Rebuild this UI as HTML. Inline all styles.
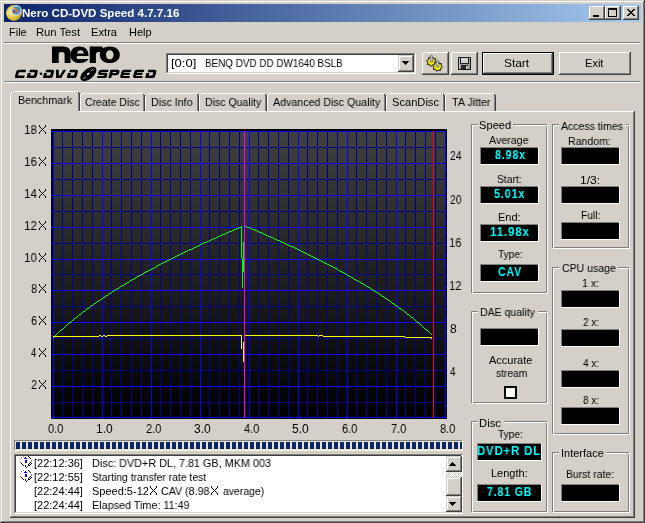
<!DOCTYPE html>
<html><head><meta charset="utf-8"><style>
html,body{margin:0;padding:0;}
body{width:645px;height:523px;position:relative;overflow:hidden;background:#D4D0C8;font-family:"Liberation Sans",sans-serif;font-size:11px;line-height:13px;color:#000;}
body>div,body>span,body>svg{position:absolute;display:block;}
span{white-space:nowrap;will-change:transform;}
</style></head><body>
<div style="left:0px;top:1px;width:644px;height:1px;background:#FFFFFF;"></div>
<div style="left:1px;top:1px;width:1px;height:521px;background:#FFFFFF;"></div>
<div style="left:644px;top:0px;width:1px;height:523px;background:#404040;"></div>
<div style="left:0px;top:522px;width:645px;height:1px;background:#404040;"></div>
<div style="left:643px;top:1px;width:1px;height:521px;background:#808080;"></div>
<div style="left:1px;top:521px;width:643px;height:1px;background:#808080;"></div>
<div style="left:4px;top:4px;width:637px;height:18px;background:linear-gradient(to right,#0A246A,#A6CAF0);"></div>
<span style="left:22.25px;top:7px;font-size:11px;font-weight:bold;color:#fff;letter-spacing:0px;white-space:pre;transform:scaleX(1.0503);transform-origin:0 0;">Nero CD-DVD Speed 4.7.7.16</span>
<div style="left:589px;top:6px;width:16px;height:14px;background:#D4D0C8;"></div>
<div style="left:589px;top:6px;width:15px;height:1px;background:#FFFFFF;"></div>
<div style="left:589px;top:6px;width:1px;height:13px;background:#FFFFFF;"></div>
<div style="left:589px;top:19px;width:16px;height:1px;background:#404040;"></div>
<div style="left:604px;top:6px;width:1px;height:14px;background:#404040;"></div>
<div style="left:590px;top:7px;width:13px;height:1px;background:#D4D0C8;"></div>
<div style="left:590px;top:7px;width:1px;height:11px;background:#D4D0C8;"></div>
<div style="left:590px;top:18px;width:14px;height:1px;background:#808080;"></div>
<div style="left:603px;top:7px;width:1px;height:12px;background:#808080;"></div>
<div style="left:605px;top:6px;width:16px;height:14px;background:#D4D0C8;"></div>
<div style="left:605px;top:6px;width:15px;height:1px;background:#FFFFFF;"></div>
<div style="left:605px;top:6px;width:1px;height:13px;background:#FFFFFF;"></div>
<div style="left:605px;top:19px;width:16px;height:1px;background:#404040;"></div>
<div style="left:620px;top:6px;width:1px;height:14px;background:#404040;"></div>
<div style="left:606px;top:7px;width:13px;height:1px;background:#D4D0C8;"></div>
<div style="left:606px;top:7px;width:1px;height:11px;background:#D4D0C8;"></div>
<div style="left:606px;top:18px;width:14px;height:1px;background:#808080;"></div>
<div style="left:619px;top:7px;width:1px;height:12px;background:#808080;"></div>
<div style="left:623px;top:6px;width:16px;height:14px;background:#D4D0C8;"></div>
<div style="left:623px;top:6px;width:15px;height:1px;background:#FFFFFF;"></div>
<div style="left:623px;top:6px;width:1px;height:13px;background:#FFFFFF;"></div>
<div style="left:623px;top:19px;width:16px;height:1px;background:#404040;"></div>
<div style="left:638px;top:6px;width:1px;height:14px;background:#404040;"></div>
<div style="left:624px;top:7px;width:13px;height:1px;background:#D4D0C8;"></div>
<div style="left:624px;top:7px;width:1px;height:11px;background:#D4D0C8;"></div>
<div style="left:624px;top:18px;width:14px;height:1px;background:#808080;"></div>
<div style="left:637px;top:7px;width:1px;height:12px;background:#808080;"></div>
<div style="left:593px;top:15px;width:6px;height:2px;background:#000;"></div>
<div style="left:608px;top:8px;width:9px;height:9px;background:transparent;box-sizing:border-box;border:1px solid #000;border-top-width:2px;"></div>
<svg style="left:627px;top:9px" width="8" height="7" shape-rendering="crispEdges" fill="#000"><rect x="0" y="0" width="1" height="1"/><rect x="1" y="0" width="1" height="1"/><rect x="6" y="0" width="1" height="1"/><rect x="7" y="0" width="1" height="1"/><rect x="1" y="1" width="1" height="1"/><rect x="2" y="1" width="1" height="1"/><rect x="5" y="1" width="1" height="1"/><rect x="6" y="1" width="1" height="1"/><rect x="2" y="2" width="1" height="1"/><rect x="3" y="2" width="1" height="1"/><rect x="4" y="2" width="1" height="1"/><rect x="5" y="2" width="1" height="1"/><rect x="3" y="3" width="1" height="1"/><rect x="4" y="3" width="1" height="1"/><rect x="2" y="4" width="1" height="1"/><rect x="3" y="4" width="1" height="1"/><rect x="4" y="4" width="1" height="1"/><rect x="5" y="4" width="1" height="1"/><rect x="1" y="5" width="1" height="1"/><rect x="2" y="5" width="1" height="1"/><rect x="5" y="5" width="1" height="1"/><rect x="6" y="5" width="1" height="1"/><rect x="0" y="6" width="1" height="1"/><rect x="1" y="6" width="1" height="1"/><rect x="6" y="6" width="1" height="1"/><rect x="7" y="6" width="1" height="1"/></svg>
<svg style="left:0px;top:0px" width="24" height="24" viewBox="0 0 24 24">
<defs><radialGradient id="gd" cx="0.35" cy="0.45" r="0.75"><stop offset="0" stop-color="#F8F0B0"/><stop offset="0.5" stop-color="#E0C840"/><stop offset="1" stop-color="#A08818"/></radialGradient></defs>
<circle cx="13.9" cy="13" r="7.9" fill="url(#gd)"/>
<circle cx="16.6" cy="10.4" r="4.7" fill="#4098E8" stroke="#D0D0D8" stroke-width="1.2"/>
<path d="M14.2,7.8 L18.6,12.6" stroke="#F06020" stroke-width="1.6"/>
<circle cx="13.8" cy="11.8" r="1.3" fill="#C02020"/>
<circle cx="18.6" cy="8.2" r="1.1" fill="#30A040"/>
<circle cx="14.2" cy="8.6" r="0.8" fill="#F0D020"/>
</svg>
<span style="left:8.62px;top:26px;font-size:11px;color:#000;letter-spacing:0px;white-space:pre;transform:scaleX(0.9750);transform-origin:0 0;">File</span>
<span style="left:36.18px;top:26px;font-size:11px;color:#000;letter-spacing:0px;white-space:pre;transform:scaleX(1.0190);transform-origin:0 0;">Run Test</span>
<span style="left:91.38px;top:26px;font-size:11px;color:#000;letter-spacing:0px;white-space:pre;transform:scaleX(1.0160);transform-origin:0 0;">Extra</span>
<span style="left:129.21px;top:26px;font-size:11px;color:#000;letter-spacing:0px;white-space:pre;transform:scaleX(0.9905);transform-origin:0 0;">Help</span>
<div style="left:4px;top:42px;width:636px;height:1px;background:#808080;"></div>
<div style="left:4px;top:43px;width:636px;height:1px;background:#FFFFFF;"></div>
<div style="left:4px;top:81px;width:636px;height:1px;background:#808080;"></div>
<div style="left:4px;top:82px;width:636px;height:1px;background:#FFFFFF;"></div>
<svg style="left:0px;top:40px" width="170" height="45" viewBox="0 40 170 45">
<g fill="#000" fill-rule="evenodd">
<path d="M52,63 V46.6 H63.5 Q70.6,46.6 70.6,53.2 V63 H64.6 V54.2 Q64.6,52 61.6,52 Q58.7,52 58.7,54.2 V63 Z"/>
<path d="M79.4,46.4 C85.2,46.4 88.4,49.8 88.4,54.6 L88.4,56 L76.8,56 L76.8,58.9 L88.4,58.9 C87.2,61.6 84.2,63 79.4,63 C73.8,63 70.4,59.6 70.4,54.7 C70.4,49.8 73.8,46.4 79.4,46.4 Z M77,53.6 L84,53.6 C83.6,51.4 82,50.2 80.5,50.2 C78.8,50.2 77.4,51.4 77,53.6 Z"/>
<path d="M89.7,63 V46.6 H101 Q103.2,46.6 103.2,48.5 V52 H98.2 Q95.9,52 95.9,54.5 V63 Z"/>
<path d="M109.8,46.4 C115.8,46.4 119.8,49.6 119.8,54.7 C119.8,59.8 115.8,63 109.8,63 C103.8,63 99.8,59.8 99.8,54.7 C99.8,49.6 103.8,46.4 109.8,46.4 Z M109.8,50.2 C107.6,50.2 106,52 106,54.8 C106,57.6 107.6,59.5 109.8,59.5 C112,59.5 113.6,57.6 113.6,54.8 C113.6,52 112,50.2 109.8,50.2 Z"/>
</g>
<g transform="translate(0,78.1) skewX(-14) translate(0,-78.1)" fill="#000" fill-rule="evenodd">
<path transform="translate(14.5,69.69999999999999)" d="M9.6,0 H2.2 Q0,0 0,2.2 V6.2 Q0,8.4 2.2,8.4 H9.6 V5.8 H2.9 V2.6 H9.6 Z"/><path transform="translate(26.6,69.69999999999999)" d="M1.2,0 H7.4 Q9.6,0 9.6,2.2 V6.2 Q9.6,8.4 7.4,8.4 H0 V3.4 H2.9 V5.8 H6.7 V2.6 H1.2 Z"/><path transform="translate(42.8,69.69999999999999)" d="M1.2,0 H7.4 Q9.6,0 9.6,2.2 V6.2 Q9.6,8.4 7.4,8.4 H0 V3.4 H2.9 V5.8 H6.7 V2.6 H1.2 Z"/><path transform="translate(53.8,69.69999999999999)" d="M0,0 H2.9 L4.4,5.8 H5.4 L7.3,0 H10.2 L7.4,8.4 H2.3 Z"/><path transform="translate(66.7,69.69999999999999)" d="M1.2,0 H7.4 Q9.6,0 9.6,2.2 V6.2 Q9.6,8.4 7.4,8.4 H0 V3.4 H2.9 V5.8 H6.7 V2.6 H1.2 Z"/><path transform="translate(96.9,69.69999999999999)" d="M9.6,0 H2.2 Q0,0 0,2.2 V3.1 Q0,5.3 2.2,5.3 H6.7 V6.2 H0 V8.4 H7.4 Q9.6,8.4 9.6,6.2 V5.3 Q9.6,3.1 7.4,3.1 H2.9 V2.2 H9.6 Z"/><path transform="translate(108.3,69.69999999999999)" d="M0,8.4 V0 H7.4 Q9.6,0 9.6,2.2 V3.4 Q9.6,5.6 7.4,5.6 H2.9 V8.4 Z M2.9,2.2 H6.7 V3.4 H2.9 Z"/><path transform="translate(119.8,69.69999999999999)" d="M9.6,0 H2.2 Q0,0 0,2.2 V6.2 Q0,8.4 2.2,8.4 H9.6 V6.2 H2.9 V5.3 H8.8 V3.1 H2.9 V2.2 H9.6 Z"/><path transform="translate(132.6,69.69999999999999)" d="M9.6,0 H2.2 Q0,0 0,2.2 V6.2 Q0,8.4 2.2,8.4 H9.6 V6.2 H2.9 V5.3 H8.8 V3.1 H2.9 V2.2 H9.6 Z"/><path transform="translate(145.1,69.69999999999999)" d="M1.2,0 H7.4 Q9.6,0 9.6,2.2 V6.2 Q9.6,8.4 7.4,8.4 H0 V3.4 H2.9 V5.8 H6.7 V2.6 H1.2 Z"/>
</g>
<rect x="39.8" y="72.6" width="2.3" height="2.3" fill="#000"/>
<ellipse cx="88.4" cy="73.9" rx="9.5" ry="5.1" transform="rotate(-38.5 88.4 73.9)" fill="#000"/>
<ellipse cx="88.3" cy="73.8" rx="1.7" ry="1.0" transform="rotate(-38.5 88.3 73.8)" fill="#E0E0E0"/>
<path d="M83.4,79.0 L86.0,76.4 M90.8,71.2 L93.4,68.8" stroke="#C8C8C8" stroke-width="0.9"/>
</svg>
<div style="left:166px;top:53px;width:250px;height:21px;background:#FFFFFF;"></div>
<div style="left:166px;top:53px;width:249px;height:1px;background:#808080;"></div>
<div style="left:166px;top:53px;width:1px;height:20px;background:#808080;"></div>
<div style="left:166px;top:73px;width:250px;height:1px;background:#FFFFFF;"></div>
<div style="left:415px;top:53px;width:1px;height:21px;background:#FFFFFF;"></div>
<div style="left:167px;top:54px;width:247px;height:1px;background:#404040;"></div>
<div style="left:167px;top:54px;width:1px;height:18px;background:#404040;"></div>
<div style="left:167px;top:72px;width:248px;height:1px;background:#D4D0C8;"></div>
<div style="left:414px;top:54px;width:1px;height:19px;background:#D4D0C8;"></div>
<span style="left:171.22px;top:57px;font-size:11px;color:#000;letter-spacing:0px;white-space:pre;transform:scaleX(1.1800);transform-origin:0 0;">[0:0]</span>
<span style="left:204.80px;top:57px;font-size:11px;color:#000;letter-spacing:0px;white-space:pre;transform:scaleX(0.8974);transform-origin:0 0;">BENQ DVD DD DW1640 BSLB</span>
<div style="left:398px;top:55px;width:16px;height:17px;background:#D4D0C8;"></div>
<div style="left:398px;top:55px;width:15px;height:1px;background:#D4D0C8;"></div>
<div style="left:398px;top:55px;width:1px;height:16px;background:#D4D0C8;"></div>
<div style="left:398px;top:71px;width:16px;height:1px;background:#404040;"></div>
<div style="left:413px;top:55px;width:1px;height:17px;background:#404040;"></div>
<div style="left:399px;top:56px;width:13px;height:1px;background:#FFFFFF;"></div>
<div style="left:399px;top:56px;width:1px;height:14px;background:#FFFFFF;"></div>
<div style="left:399px;top:70px;width:14px;height:1px;background:#808080;"></div>
<div style="left:412px;top:56px;width:1px;height:15px;background:#808080;"></div>
<svg style="left:402px;top:61px" width="7" height="4" shape-rendering="crispEdges" fill="#000"><rect x="0" y="0" width="7" height="1"/><rect x="1" y="1" width="5" height="1"/><rect x="2" y="2" width="3" height="1"/><rect x="3" y="3" width="1" height="1"/></svg>
<div style="left:422px;top:52px;width:27px;height:23px;background:#D4D0C8;"></div>
<div style="left:422px;top:52px;width:26px;height:1px;background:#FFFFFF;"></div>
<div style="left:422px;top:52px;width:1px;height:22px;background:#FFFFFF;"></div>
<div style="left:422px;top:74px;width:27px;height:1px;background:#404040;"></div>
<div style="left:448px;top:52px;width:1px;height:23px;background:#404040;"></div>
<div style="left:423px;top:53px;width:24px;height:1px;background:#D4D0C8;"></div>
<div style="left:423px;top:53px;width:1px;height:20px;background:#D4D0C8;"></div>
<div style="left:423px;top:73px;width:25px;height:1px;background:#808080;"></div>
<div style="left:447px;top:53px;width:1px;height:21px;background:#808080;"></div>
<div style="left:451px;top:52px;width:27px;height:23px;background:#D4D0C8;"></div>
<div style="left:451px;top:52px;width:26px;height:1px;background:#FFFFFF;"></div>
<div style="left:451px;top:52px;width:1px;height:22px;background:#FFFFFF;"></div>
<div style="left:451px;top:74px;width:27px;height:1px;background:#404040;"></div>
<div style="left:477px;top:52px;width:1px;height:23px;background:#404040;"></div>
<div style="left:452px;top:53px;width:24px;height:1px;background:#D4D0C8;"></div>
<div style="left:452px;top:53px;width:1px;height:20px;background:#D4D0C8;"></div>
<div style="left:452px;top:73px;width:25px;height:1px;background:#808080;"></div>
<div style="left:476px;top:53px;width:1px;height:21px;background:#808080;"></div>
<svg style="left:420px;top:50px" width="27" height="24" viewBox="420 50 27 24">
<polygon points="436.40,62.48 434.49,63.50 434.28,65.66 432.20,65.03 430.52,66.40 429.50,64.49 427.34,64.28 427.97,62.20 426.60,60.52 428.51,59.50 428.72,57.34 430.80,57.97 432.48,56.60 433.50,58.51 435.66,58.72 435.03,60.80" fill="#F8F000" stroke="#000" stroke-width="0.9" stroke-linejoin="round"/>
<polygon points="442.40,67.48 440.49,68.50 440.28,70.66 438.20,70.03 436.52,71.40 435.50,69.49 433.34,69.28 433.97,67.20 432.60,65.52 434.51,64.50 434.72,62.34 436.80,62.97 438.48,61.60 439.50,63.51 441.66,63.72 441.03,65.80" fill="#F8F000" stroke="#000" stroke-width="0.9" stroke-linejoin="round"/>
<path d="M430.2,62 V56.5 L431.5,54.8 L432.8,56.5 V62 Z" fill="#B8C0D0" stroke="#404858" stroke-width="0.6"/>
<path d="M436.2,67 V61.5 L437.5,59.8 L438.8,61.5 V67 Z" fill="#B8C0D0" stroke="#404858" stroke-width="0.6"/>
</svg>
<svg style="left:458px;top:57px" width="13" height="13" viewBox="0 0 13 13" shape-rendering="crispEdges">
<rect x="0" y="0" width="13" height="13" fill="#1A1A1A"/>
<rect x="1" y="1" width="11" height="11" fill="#9C9C9C"/>
<rect x="2" y="1" width="9" height="6" fill="#202020"/>
<rect x="3" y="1" width="7" height="5" fill="#D4D4D4"/>
<rect x="3" y="8" width="7" height="4" fill="#282828"/>
<rect x="8" y="9" width="2" height="3" fill="#C0C0C0"/>
<rect x="11" y="1" width="1" height="1" fill="#E0E0E0"/>
<rect x="1" y="1" width="1" height="11" fill="#C8C8C8"/>
</svg>
<div style="left:482px;top:52px;width:72px;height:23px;background:#000;"></div>
<div style="left:483px;top:53px;width:70px;height:21px;background:#D4D0C8;"></div>
<div style="left:483px;top:53px;width:69px;height:1px;background:#FFFFFF;"></div>
<div style="left:483px;top:53px;width:1px;height:20px;background:#FFFFFF;"></div>
<div style="left:483px;top:73px;width:70px;height:1px;background:#404040;"></div>
<div style="left:552px;top:53px;width:1px;height:21px;background:#404040;"></div>
<div style="left:484px;top:54px;width:67px;height:1px;background:#D4D0C8;"></div>
<div style="left:484px;top:54px;width:1px;height:18px;background:#D4D0C8;"></div>
<div style="left:484px;top:72px;width:68px;height:1px;background:#808080;"></div>
<div style="left:551px;top:54px;width:1px;height:19px;background:#808080;"></div>
<span style="left:504.22px;top:57px;font-size:11px;color:#000;letter-spacing:0px;white-space:pre;transform:scaleX(1.0818);transform-origin:0 0;">Start</span>
<div style="left:559px;top:52px;width:72px;height:23px;background:#D4D0C8;"></div>
<div style="left:559px;top:52px;width:71px;height:1px;background:#FFFFFF;"></div>
<div style="left:559px;top:52px;width:1px;height:22px;background:#FFFFFF;"></div>
<div style="left:559px;top:74px;width:72px;height:1px;background:#404040;"></div>
<div style="left:630px;top:52px;width:1px;height:23px;background:#404040;"></div>
<div style="left:560px;top:53px;width:69px;height:1px;background:#D4D0C8;"></div>
<div style="left:560px;top:53px;width:1px;height:20px;background:#D4D0C8;"></div>
<div style="left:560px;top:73px;width:70px;height:1px;background:#808080;"></div>
<div style="left:629px;top:53px;width:1px;height:21px;background:#808080;"></div>
<span style="left:584.69px;top:57px;font-size:11px;color:#000;letter-spacing:0px;white-space:pre;transform:scaleX(1.0059);transform-origin:0 0;">Exit</span>
<div style="left:10px;top:111px;width:624px;height:1px;background:#FFFFFF;"></div>
<div style="left:10px;top:111px;width:1px;height:406px;background:#FFFFFF;"></div>
<div style="left:633px;top:112px;width:1px;height:405px;background:#808080;"></div>
<div style="left:634px;top:111px;width:1px;height:407px;background:#404040;"></div>
<div style="left:11px;top:516px;width:623px;height:1px;background:#808080;"></div>
<div style="left:10px;top:517px;width:625px;height:1px;background:#404040;"></div>
<div style="left:11px;top:92px;width:68px;height:21px;background:#D4D0C8;"></div>
<div style="left:10px;top:93px;width:1px;height:19px;background:#FFFFFF;"></div>
<div style="left:11px;top:92px;width:1px;height:1px;background:#FFFFFF;"></div>
<div style="left:12px;top:91px;width:66px;height:1px;background:#FFFFFF;"></div>
<div style="left:78px;top:92px;width:1px;height:19px;background:#808080;"></div>
<div style="left:79px;top:93px;width:1px;height:18px;background:#404040;"></div>
<div style="left:78px;top:92px;width:1px;height:1px;background:#404040;"></div>
<span style="left:17.63px;top:94px;font-size:11px;color:#000;letter-spacing:0px;white-space:pre;transform:scaleX(0.9709);transform-origin:0 0;">Benchmark</span>
<div style="left:80px;top:95px;width:1px;height:16px;background:#FFFFFF;"></div>
<div style="left:81px;top:94px;width:1px;height:1px;background:#FFFFFF;"></div>
<div style="left:82px;top:93px;width:61px;height:1px;background:#FFFFFF;"></div>
<div style="left:143px;top:94px;width:1px;height:17px;background:#808080;"></div>
<div style="left:144px;top:95px;width:1px;height:16px;background:#404040;"></div>
<div style="left:143px;top:94px;width:1px;height:1px;background:#404040;"></div>
<span style="left:84.80px;top:96px;font-size:11px;color:#000;letter-spacing:0px;white-space:pre;transform:scaleX(0.9509);transform-origin:0 0;">Create Disc</span>
<div style="left:145px;top:95px;width:1px;height:16px;background:#FFFFFF;"></div>
<div style="left:146px;top:94px;width:1px;height:1px;background:#FFFFFF;"></div>
<div style="left:147px;top:93px;width:50px;height:1px;background:#FFFFFF;"></div>
<div style="left:197px;top:94px;width:1px;height:17px;background:#808080;"></div>
<div style="left:198px;top:95px;width:1px;height:16px;background:#404040;"></div>
<div style="left:197px;top:94px;width:1px;height:1px;background:#404040;"></div>
<span style="left:150.93px;top:96px;font-size:11px;color:#000;letter-spacing:0px;white-space:pre;transform:scaleX(0.9714);transform-origin:0 0;">Disc Info</span>
<div style="left:199px;top:95px;width:1px;height:16px;background:#FFFFFF;"></div>
<div style="left:200px;top:94px;width:1px;height:1px;background:#FFFFFF;"></div>
<div style="left:201px;top:93px;width:64px;height:1px;background:#FFFFFF;"></div>
<div style="left:265px;top:94px;width:1px;height:17px;background:#808080;"></div>
<div style="left:266px;top:95px;width:1px;height:16px;background:#404040;"></div>
<div style="left:265px;top:94px;width:1px;height:1px;background:#404040;"></div>
<span style="left:204.54px;top:96px;font-size:11px;color:#000;letter-spacing:0px;white-space:pre;transform:scaleX(0.9569);transform-origin:0 0;">Disc Quality</span>
<div style="left:267px;top:95px;width:1px;height:16px;background:#FFFFFF;"></div>
<div style="left:268px;top:94px;width:1px;height:1px;background:#FFFFFF;"></div>
<div style="left:269px;top:93px;width:115px;height:1px;background:#FFFFFF;"></div>
<div style="left:384px;top:94px;width:1px;height:17px;background:#808080;"></div>
<div style="left:385px;top:95px;width:1px;height:16px;background:#404040;"></div>
<div style="left:384px;top:94px;width:1px;height:1px;background:#404040;"></div>
<span style="left:273.00px;top:96px;font-size:11px;color:#000;letter-spacing:0px;white-space:pre;transform:scaleX(0.9685);transform-origin:0 0;">Advanced Disc Quality</span>
<div style="left:386px;top:95px;width:1px;height:16px;background:#FFFFFF;"></div>
<div style="left:387px;top:94px;width:1px;height:1px;background:#FFFFFF;"></div>
<div style="left:388px;top:93px;width:55px;height:1px;background:#FFFFFF;"></div>
<div style="left:443px;top:94px;width:1px;height:17px;background:#808080;"></div>
<div style="left:444px;top:95px;width:1px;height:16px;background:#404040;"></div>
<div style="left:443px;top:94px;width:1px;height:1px;background:#404040;"></div>
<span style="left:392.49px;top:96px;font-size:11px;color:#000;letter-spacing:0px;white-space:pre;transform:scaleX(1.0111);transform-origin:0 0;">ScanDisc</span>
<div style="left:445px;top:95px;width:1px;height:16px;background:#FFFFFF;"></div>
<div style="left:446px;top:94px;width:1px;height:1px;background:#FFFFFF;"></div>
<div style="left:447px;top:93px;width:47px;height:1px;background:#FFFFFF;"></div>
<div style="left:494px;top:94px;width:1px;height:17px;background:#808080;"></div>
<div style="left:495px;top:95px;width:1px;height:16px;background:#404040;"></div>
<div style="left:494px;top:94px;width:1px;height:1px;background:#404040;"></div>
<span style="left:451.60px;top:96px;font-size:11px;color:#000;letter-spacing:0px;white-space:pre;transform:scaleX(0.9744);transform-origin:0 0;">TA Jitter</span>
<svg style="left:0;top:0" width="645" height="523" shape-rendering="crispEdges">
<defs><linearGradient id="bg" x1="0" y1="0" x2="0" y2="1"><stop offset="0" stop-color="#404040"/><stop offset="1" stop-color="#000000"/></linearGradient></defs>
<rect x="51" y="129" width="396" height="290" fill="#000"/>
<rect x="53" y="131" width="393" height="287" fill="url(#bg)"/>
<rect x="51" y="131" width="395" height="1" fill="#0000FF"/>
<rect x="51" y="147" width="395" height="1" fill="#000088"/>
<rect x="51" y="163" width="395" height="1" fill="#0000FF"/>
<rect x="51" y="179" width="395" height="1" fill="#000088"/>
<rect x="51" y="195" width="395" height="1" fill="#0000FF"/>
<rect x="51" y="211" width="395" height="1" fill="#000088"/>
<rect x="51" y="227" width="395" height="1" fill="#0000FF"/>
<rect x="51" y="243" width="395" height="1" fill="#000088"/>
<rect x="51" y="259" width="395" height="1" fill="#0000FF"/>
<rect x="51" y="274" width="395" height="1" fill="#000088"/>
<rect x="51" y="290" width="395" height="1" fill="#0000FF"/>
<rect x="51" y="306" width="395" height="1" fill="#000088"/>
<rect x="51" y="322" width="395" height="1" fill="#0000FF"/>
<rect x="51" y="338" width="395" height="1" fill="#000088"/>
<rect x="51" y="354" width="395" height="1" fill="#0000FF"/>
<rect x="51" y="370" width="395" height="1" fill="#000088"/>
<rect x="51" y="386" width="395" height="1" fill="#0000FF"/>
<rect x="51" y="402" width="395" height="1" fill="#000088"/>
<rect x="51" y="417" width="395" height="1" fill="#0000FF"/>
<rect x="53" y="131" width="1" height="288" fill="#0000FF"/>
<rect x="62" y="131" width="1" height="288" fill="#000088"/>
<rect x="72" y="131" width="1" height="288" fill="#000088"/>
<rect x="82" y="131" width="1" height="288" fill="#000088"/>
<rect x="92" y="131" width="1" height="288" fill="#000088"/>
<rect x="102" y="131" width="1" height="288" fill="#0000FF"/>
<rect x="111" y="131" width="1" height="288" fill="#000088"/>
<rect x="121" y="131" width="1" height="288" fill="#000088"/>
<rect x="131" y="131" width="1" height="288" fill="#000088"/>
<rect x="141" y="131" width="1" height="288" fill="#000088"/>
<rect x="151" y="131" width="1" height="288" fill="#0000FF"/>
<rect x="160" y="131" width="1" height="288" fill="#000088"/>
<rect x="170" y="131" width="1" height="288" fill="#000088"/>
<rect x="180" y="131" width="1" height="288" fill="#000088"/>
<rect x="190" y="131" width="1" height="288" fill="#000088"/>
<rect x="200" y="131" width="1" height="288" fill="#0000FF"/>
<rect x="209" y="131" width="1" height="288" fill="#000088"/>
<rect x="219" y="131" width="1" height="288" fill="#000088"/>
<rect x="229" y="131" width="1" height="288" fill="#000088"/>
<rect x="239" y="131" width="1" height="288" fill="#000088"/>
<rect x="249" y="131" width="1" height="288" fill="#0000FF"/>
<rect x="258" y="131" width="1" height="288" fill="#000088"/>
<rect x="268" y="131" width="1" height="288" fill="#000088"/>
<rect x="278" y="131" width="1" height="288" fill="#000088"/>
<rect x="288" y="131" width="1" height="288" fill="#000088"/>
<rect x="298" y="131" width="1" height="288" fill="#0000FF"/>
<rect x="307" y="131" width="1" height="288" fill="#000088"/>
<rect x="317" y="131" width="1" height="288" fill="#000088"/>
<rect x="327" y="131" width="1" height="288" fill="#000088"/>
<rect x="337" y="131" width="1" height="288" fill="#000088"/>
<rect x="347" y="131" width="1" height="288" fill="#0000FF"/>
<rect x="356" y="131" width="1" height="288" fill="#000088"/>
<rect x="366" y="131" width="1" height="288" fill="#000088"/>
<rect x="376" y="131" width="1" height="288" fill="#000088"/>
<rect x="386" y="131" width="1" height="288" fill="#000088"/>
<rect x="396" y="131" width="1" height="288" fill="#0000FF"/>
<rect x="405" y="131" width="1" height="288" fill="#000088"/>
<rect x="415" y="131" width="1" height="288" fill="#000088"/>
<rect x="425" y="131" width="1" height="288" fill="#000088"/>
<rect x="435" y="131" width="1" height="288" fill="#000088"/>
<rect x="445" y="131" width="1" height="288" fill="#0000FF"/>
<rect x="53" y="337" width="1" height="1" fill="#00FF00"/>
<rect x="54" y="336" width="1" height="1" fill="#00FF00"/>
<rect x="55" y="335" width="1" height="1" fill="#00FF00"/>
<rect x="56" y="334" width="1" height="1" fill="#00FF00"/>
<rect x="57" y="333" width="1" height="1" fill="#00FF00"/>
<rect x="58" y="332" width="1" height="1" fill="#00FF00"/>
<rect x="59" y="331" width="1" height="1" fill="#00FF00"/>
<rect x="60" y="330" width="1" height="1" fill="#00FF00"/>
<rect x="61" y="329" width="1" height="1" fill="#00FF00"/>
<rect x="62" y="329" width="1" height="1" fill="#00FF00"/>
<rect x="63" y="328" width="1" height="1" fill="#00FF00"/>
<rect x="64" y="327" width="1" height="1" fill="#00FF00"/>
<rect x="65" y="326" width="1" height="1" fill="#00FF00"/>
<rect x="66" y="325" width="1" height="1" fill="#00FF00"/>
<rect x="67" y="324" width="1" height="1" fill="#00FF00"/>
<rect x="68" y="323" width="1" height="1" fill="#00FF00"/>
<rect x="69" y="322" width="1" height="1" fill="#00FF00"/>
<rect x="70" y="322" width="1" height="1" fill="#00FF00"/>
<rect x="71" y="321" width="1" height="1" fill="#00FF00"/>
<rect x="72" y="320" width="1" height="1" fill="#00FF00"/>
<rect x="73" y="319" width="1" height="1" fill="#00FF00"/>
<rect x="74" y="318" width="1" height="1" fill="#00FF00"/>
<rect x="75" y="318" width="1" height="1" fill="#00FF00"/>
<rect x="76" y="317" width="1" height="1" fill="#00FF00"/>
<rect x="77" y="316" width="1" height="1" fill="#00FF00"/>
<rect x="78" y="315" width="1" height="1" fill="#00FF00"/>
<rect x="79" y="314" width="1" height="1" fill="#00FF00"/>
<rect x="80" y="314" width="1" height="1" fill="#00FF00"/>
<rect x="81" y="313" width="1" height="1" fill="#00FF00"/>
<rect x="82" y="312" width="1" height="1" fill="#00FF00"/>
<rect x="83" y="311" width="1" height="1" fill="#00FF00"/>
<rect x="84" y="311" width="1" height="1" fill="#00FF00"/>
<rect x="85" y="310" width="1" height="1" fill="#00FF00"/>
<rect x="86" y="309" width="1" height="1" fill="#00FF00"/>
<rect x="87" y="308" width="1" height="1" fill="#00FF00"/>
<rect x="88" y="308" width="1" height="1" fill="#00FF00"/>
<rect x="89" y="307" width="1" height="1" fill="#00FF00"/>
<rect x="90" y="306" width="1" height="1" fill="#00FF00"/>
<rect x="91" y="305" width="1" height="1" fill="#00FF00"/>
<rect x="92" y="305" width="1" height="1" fill="#00FF00"/>
<rect x="93" y="304" width="1" height="1" fill="#00FF00"/>
<rect x="94" y="303" width="1" height="1" fill="#00FF00"/>
<rect x="95" y="303" width="1" height="1" fill="#00FF00"/>
<rect x="96" y="302" width="1" height="1" fill="#00FF00"/>
<rect x="97" y="301" width="1" height="1" fill="#00FF00"/>
<rect x="98" y="301" width="1" height="1" fill="#00FF00"/>
<rect x="99" y="300" width="1" height="1" fill="#00FF00"/>
<rect x="100" y="299" width="1" height="1" fill="#00FF00"/>
<rect x="101" y="299" width="1" height="1" fill="#00FF00"/>
<rect x="102" y="298" width="1" height="1" fill="#00FF00"/>
<rect x="103" y="297" width="1" height="1" fill="#00FF00"/>
<rect x="104" y="297" width="1" height="1" fill="#00FF00"/>
<rect x="105" y="296" width="1" height="1" fill="#00FF00"/>
<rect x="106" y="295" width="1" height="1" fill="#00FF00"/>
<rect x="107" y="295" width="1" height="1" fill="#00FF00"/>
<rect x="108" y="294" width="1" height="1" fill="#00FF00"/>
<rect x="109" y="293" width="1" height="1" fill="#00FF00"/>
<rect x="110" y="293" width="1" height="1" fill="#00FF00"/>
<rect x="111" y="292" width="1" height="1" fill="#00FF00"/>
<rect x="112" y="291" width="1" height="1" fill="#00FF00"/>
<rect x="113" y="291" width="1" height="1" fill="#00FF00"/>
<rect x="114" y="290" width="1" height="1" fill="#00FF00"/>
<rect x="115" y="289" width="1" height="1" fill="#00FF00"/>
<rect x="116" y="289" width="1" height="1" fill="#00FF00"/>
<rect x="117" y="288" width="1" height="1" fill="#00FF00"/>
<rect x="118" y="288" width="1" height="1" fill="#00FF00"/>
<rect x="119" y="287" width="1" height="1" fill="#00FF00"/>
<rect x="120" y="286" width="1" height="1" fill="#00FF00"/>
<rect x="121" y="286" width="1" height="1" fill="#00FF00"/>
<rect x="122" y="285" width="1" height="1" fill="#00FF00"/>
<rect x="123" y="285" width="1" height="1" fill="#00FF00"/>
<rect x="124" y="284" width="1" height="1" fill="#00FF00"/>
<rect x="125" y="283" width="1" height="1" fill="#00FF00"/>
<rect x="126" y="283" width="1" height="1" fill="#00FF00"/>
<rect x="127" y="282" width="1" height="1" fill="#00FF00"/>
<rect x="128" y="282" width="1" height="1" fill="#00FF00"/>
<rect x="129" y="281" width="1" height="1" fill="#00FF00"/>
<rect x="130" y="280" width="1" height="1" fill="#00FF00"/>
<rect x="131" y="280" width="1" height="1" fill="#00FF00"/>
<rect x="132" y="279" width="1" height="1" fill="#00FF00"/>
<rect x="133" y="279" width="1" height="1" fill="#00FF00"/>
<rect x="134" y="278" width="1" height="1" fill="#00FF00"/>
<rect x="135" y="278" width="1" height="1" fill="#00FF00"/>
<rect x="136" y="277" width="1" height="1" fill="#00FF00"/>
<rect x="137" y="276" width="1" height="1" fill="#00FF00"/>
<rect x="138" y="276" width="1" height="1" fill="#00FF00"/>
<rect x="139" y="275" width="1" height="1" fill="#00FF00"/>
<rect x="140" y="275" width="1" height="1" fill="#00FF00"/>
<rect x="141" y="274" width="1" height="1" fill="#00FF00"/>
<rect x="142" y="274" width="1" height="1" fill="#00FF00"/>
<rect x="143" y="273" width="1" height="1" fill="#00FF00"/>
<rect x="144" y="272" width="1" height="1" fill="#00FF00"/>
<rect x="145" y="272" width="1" height="1" fill="#00FF00"/>
<rect x="146" y="271" width="1" height="1" fill="#00FF00"/>
<rect x="147" y="271" width="1" height="1" fill="#00FF00"/>
<rect x="148" y="270" width="1" height="1" fill="#00FF00"/>
<rect x="149" y="270" width="1" height="1" fill="#00FF00"/>
<rect x="150" y="269" width="1" height="1" fill="#00FF00"/>
<rect x="151" y="269" width="1" height="1" fill="#00FF00"/>
<rect x="152" y="268" width="1" height="1" fill="#00FF00"/>
<rect x="153" y="268" width="1" height="1" fill="#00FF00"/>
<rect x="154" y="267" width="1" height="1" fill="#00FF00"/>
<rect x="155" y="267" width="1" height="1" fill="#00FF00"/>
<rect x="156" y="266" width="1" height="1" fill="#00FF00"/>
<rect x="157" y="265" width="1" height="1" fill="#00FF00"/>
<rect x="158" y="265" width="1" height="1" fill="#00FF00"/>
<rect x="159" y="264" width="1" height="1" fill="#00FF00"/>
<rect x="160" y="264" width="1" height="1" fill="#00FF00"/>
<rect x="161" y="263" width="1" height="1" fill="#00FF00"/>
<rect x="162" y="263" width="1" height="1" fill="#00FF00"/>
<rect x="163" y="262" width="1" height="1" fill="#00FF00"/>
<rect x="164" y="262" width="1" height="1" fill="#00FF00"/>
<rect x="165" y="261" width="1" height="1" fill="#00FF00"/>
<rect x="166" y="261" width="1" height="1" fill="#00FF00"/>
<rect x="167" y="260" width="1" height="1" fill="#00FF00"/>
<rect x="168" y="260" width="1" height="1" fill="#00FF00"/>
<rect x="169" y="259" width="1" height="1" fill="#00FF00"/>
<rect x="170" y="259" width="1" height="1" fill="#00FF00"/>
<rect x="171" y="258" width="1" height="1" fill="#00FF00"/>
<rect x="172" y="258" width="1" height="1" fill="#00FF00"/>
<rect x="173" y="257" width="1" height="1" fill="#00FF00"/>
<rect x="174" y="257" width="1" height="1" fill="#00FF00"/>
<rect x="175" y="256" width="1" height="1" fill="#00FF00"/>
<rect x="176" y="256" width="1" height="1" fill="#00FF00"/>
<rect x="177" y="255" width="1" height="1" fill="#00FF00"/>
<rect x="178" y="255" width="1" height="1" fill="#00FF00"/>
<rect x="179" y="254" width="1" height="1" fill="#00FF00"/>
<rect x="180" y="254" width="1" height="1" fill="#00FF00"/>
<rect x="181" y="253" width="1" height="1" fill="#00FF00"/>
<rect x="182" y="253" width="1" height="1" fill="#00FF00"/>
<rect x="183" y="252" width="1" height="1" fill="#00FF00"/>
<rect x="184" y="252" width="1" height="1" fill="#00FF00"/>
<rect x="185" y="251" width="1" height="1" fill="#00FF00"/>
<rect x="186" y="251" width="1" height="1" fill="#00FF00"/>
<rect x="187" y="250" width="1" height="1" fill="#00FF00"/>
<rect x="188" y="250" width="1" height="1" fill="#00FF00"/>
<rect x="189" y="249" width="1" height="1" fill="#00FF00"/>
<rect x="190" y="249" width="1" height="1" fill="#00FF00"/>
<rect x="191" y="249" width="1" height="1" fill="#00FF00"/>
<rect x="192" y="248" width="1" height="1" fill="#00FF00"/>
<rect x="193" y="248" width="1" height="1" fill="#00FF00"/>
<rect x="194" y="247" width="1" height="1" fill="#00FF00"/>
<rect x="195" y="247" width="1" height="1" fill="#00FF00"/>
<rect x="196" y="246" width="1" height="1" fill="#00FF00"/>
<rect x="197" y="246" width="1" height="1" fill="#00FF00"/>
<rect x="198" y="245" width="1" height="1" fill="#00FF00"/>
<rect x="199" y="245" width="1" height="1" fill="#00FF00"/>
<rect x="200" y="244" width="1" height="1" fill="#00FF00"/>
<rect x="201" y="244" width="1" height="1" fill="#00FF00"/>
<rect x="202" y="243" width="1" height="1" fill="#00FF00"/>
<rect x="203" y="243" width="1" height="1" fill="#00FF00"/>
<rect x="204" y="242" width="1" height="1" fill="#00FF00"/>
<rect x="205" y="242" width="1" height="1" fill="#00FF00"/>
<rect x="206" y="242" width="1" height="1" fill="#00FF00"/>
<rect x="207" y="241" width="1" height="1" fill="#00FF00"/>
<rect x="208" y="241" width="1" height="1" fill="#00FF00"/>
<rect x="209" y="240" width="1" height="1" fill="#00FF00"/>
<rect x="210" y="240" width="1" height="1" fill="#00FF00"/>
<rect x="211" y="239" width="1" height="1" fill="#00FF00"/>
<rect x="212" y="239" width="1" height="1" fill="#00FF00"/>
<rect x="213" y="238" width="1" height="1" fill="#00FF00"/>
<rect x="214" y="238" width="1" height="1" fill="#00FF00"/>
<rect x="215" y="238" width="1" height="1" fill="#00FF00"/>
<rect x="216" y="237" width="1" height="1" fill="#00FF00"/>
<rect x="217" y="237" width="1" height="1" fill="#00FF00"/>
<rect x="218" y="236" width="1" height="1" fill="#00FF00"/>
<rect x="219" y="236" width="1" height="1" fill="#00FF00"/>
<rect x="220" y="235" width="1" height="1" fill="#00FF00"/>
<rect x="221" y="235" width="1" height="1" fill="#00FF00"/>
<rect x="222" y="234" width="1" height="1" fill="#00FF00"/>
<rect x="223" y="234" width="1" height="1" fill="#00FF00"/>
<rect x="224" y="234" width="1" height="1" fill="#00FF00"/>
<rect x="225" y="233" width="1" height="1" fill="#00FF00"/>
<rect x="226" y="233" width="1" height="1" fill="#00FF00"/>
<rect x="227" y="232" width="1" height="1" fill="#00FF00"/>
<rect x="228" y="232" width="1" height="1" fill="#00FF00"/>
<rect x="229" y="231" width="1" height="1" fill="#00FF00"/>
<rect x="230" y="231" width="1" height="1" fill="#00FF00"/>
<rect x="231" y="231" width="1" height="1" fill="#00FF00"/>
<rect x="232" y="230" width="1" height="1" fill="#00FF00"/>
<rect x="233" y="230" width="1" height="1" fill="#00FF00"/>
<rect x="234" y="229" width="1" height="1" fill="#00FF00"/>
<rect x="235" y="229" width="1" height="1" fill="#00FF00"/>
<rect x="236" y="228" width="1" height="1" fill="#00FF00"/>
<rect x="237" y="228" width="1" height="1" fill="#00FF00"/>
<rect x="238" y="228" width="1" height="1" fill="#00FF00"/>
<rect x="239" y="227" width="1" height="1" fill="#00FF00"/>
<rect x="240" y="227" width="1" height="1" fill="#00FF00"/>
<rect x="241" y="226" width="1" height="1" fill="#00FF00"/>
<rect x="245" y="226" width="1" height="1" fill="#00FF00"/>
<rect x="246" y="226" width="1" height="1" fill="#00FF00"/>
<rect x="247" y="227" width="1" height="1" fill="#00FF00"/>
<rect x="248" y="227" width="1" height="1" fill="#00FF00"/>
<rect x="249" y="227" width="1" height="1" fill="#00FF00"/>
<rect x="250" y="228" width="1" height="1" fill="#00FF00"/>
<rect x="251" y="228" width="1" height="1" fill="#00FF00"/>
<rect x="252" y="229" width="1" height="1" fill="#00FF00"/>
<rect x="253" y="229" width="1" height="1" fill="#00FF00"/>
<rect x="254" y="229" width="1" height="1" fill="#00FF00"/>
<rect x="255" y="230" width="1" height="1" fill="#00FF00"/>
<rect x="256" y="230" width="1" height="1" fill="#00FF00"/>
<rect x="257" y="231" width="1" height="1" fill="#00FF00"/>
<rect x="258" y="231" width="1" height="1" fill="#00FF00"/>
<rect x="259" y="232" width="1" height="1" fill="#00FF00"/>
<rect x="260" y="232" width="1" height="1" fill="#00FF00"/>
<rect x="261" y="232" width="1" height="1" fill="#00FF00"/>
<rect x="262" y="233" width="1" height="1" fill="#00FF00"/>
<rect x="263" y="233" width="1" height="1" fill="#00FF00"/>
<rect x="264" y="234" width="1" height="1" fill="#00FF00"/>
<rect x="265" y="234" width="1" height="1" fill="#00FF00"/>
<rect x="266" y="235" width="1" height="1" fill="#00FF00"/>
<rect x="267" y="235" width="1" height="1" fill="#00FF00"/>
<rect x="268" y="236" width="1" height="1" fill="#00FF00"/>
<rect x="269" y="236" width="1" height="1" fill="#00FF00"/>
<rect x="270" y="236" width="1" height="1" fill="#00FF00"/>
<rect x="271" y="237" width="1" height="1" fill="#00FF00"/>
<rect x="272" y="237" width="1" height="1" fill="#00FF00"/>
<rect x="273" y="238" width="1" height="1" fill="#00FF00"/>
<rect x="274" y="238" width="1" height="1" fill="#00FF00"/>
<rect x="275" y="239" width="1" height="1" fill="#00FF00"/>
<rect x="276" y="239" width="1" height="1" fill="#00FF00"/>
<rect x="277" y="240" width="1" height="1" fill="#00FF00"/>
<rect x="278" y="240" width="1" height="1" fill="#00FF00"/>
<rect x="279" y="240" width="1" height="1" fill="#00FF00"/>
<rect x="280" y="241" width="1" height="1" fill="#00FF00"/>
<rect x="281" y="241" width="1" height="1" fill="#00FF00"/>
<rect x="282" y="242" width="1" height="1" fill="#00FF00"/>
<rect x="283" y="242" width="1" height="1" fill="#00FF00"/>
<rect x="284" y="243" width="1" height="1" fill="#00FF00"/>
<rect x="285" y="243" width="1" height="1" fill="#00FF00"/>
<rect x="286" y="244" width="1" height="1" fill="#00FF00"/>
<rect x="287" y="244" width="1" height="1" fill="#00FF00"/>
<rect x="288" y="245" width="1" height="1" fill="#00FF00"/>
<rect x="289" y="245" width="1" height="1" fill="#00FF00"/>
<rect x="290" y="246" width="1" height="1" fill="#00FF00"/>
<rect x="291" y="246" width="1" height="1" fill="#00FF00"/>
<rect x="292" y="246" width="1" height="1" fill="#00FF00"/>
<rect x="293" y="247" width="1" height="1" fill="#00FF00"/>
<rect x="294" y="247" width="1" height="1" fill="#00FF00"/>
<rect x="295" y="248" width="1" height="1" fill="#00FF00"/>
<rect x="296" y="248" width="1" height="1" fill="#00FF00"/>
<rect x="297" y="249" width="1" height="1" fill="#00FF00"/>
<rect x="298" y="249" width="1" height="1" fill="#00FF00"/>
<rect x="299" y="250" width="1" height="1" fill="#00FF00"/>
<rect x="300" y="250" width="1" height="1" fill="#00FF00"/>
<rect x="301" y="251" width="1" height="1" fill="#00FF00"/>
<rect x="302" y="251" width="1" height="1" fill="#00FF00"/>
<rect x="303" y="252" width="1" height="1" fill="#00FF00"/>
<rect x="304" y="252" width="1" height="1" fill="#00FF00"/>
<rect x="305" y="253" width="1" height="1" fill="#00FF00"/>
<rect x="306" y="253" width="1" height="1" fill="#00FF00"/>
<rect x="307" y="254" width="1" height="1" fill="#00FF00"/>
<rect x="308" y="254" width="1" height="1" fill="#00FF00"/>
<rect x="309" y="255" width="1" height="1" fill="#00FF00"/>
<rect x="310" y="255" width="1" height="1" fill="#00FF00"/>
<rect x="311" y="256" width="1" height="1" fill="#00FF00"/>
<rect x="312" y="256" width="1" height="1" fill="#00FF00"/>
<rect x="313" y="257" width="1" height="1" fill="#00FF00"/>
<rect x="314" y="257" width="1" height="1" fill="#00FF00"/>
<rect x="315" y="258" width="1" height="1" fill="#00FF00"/>
<rect x="316" y="258" width="1" height="1" fill="#00FF00"/>
<rect x="317" y="259" width="1" height="1" fill="#00FF00"/>
<rect x="318" y="259" width="1" height="1" fill="#00FF00"/>
<rect x="319" y="260" width="1" height="1" fill="#00FF00"/>
<rect x="320" y="260" width="1" height="1" fill="#00FF00"/>
<rect x="321" y="261" width="1" height="1" fill="#00FF00"/>
<rect x="322" y="261" width="1" height="1" fill="#00FF00"/>
<rect x="323" y="262" width="1" height="1" fill="#00FF00"/>
<rect x="324" y="262" width="1" height="1" fill="#00FF00"/>
<rect x="325" y="263" width="1" height="1" fill="#00FF00"/>
<rect x="326" y="263" width="1" height="1" fill="#00FF00"/>
<rect x="327" y="264" width="1" height="1" fill="#00FF00"/>
<rect x="328" y="264" width="1" height="1" fill="#00FF00"/>
<rect x="329" y="265" width="1" height="1" fill="#00FF00"/>
<rect x="330" y="265" width="1" height="1" fill="#00FF00"/>
<rect x="331" y="266" width="1" height="1" fill="#00FF00"/>
<rect x="332" y="266" width="1" height="1" fill="#00FF00"/>
<rect x="333" y="267" width="1" height="1" fill="#00FF00"/>
<rect x="334" y="267" width="1" height="1" fill="#00FF00"/>
<rect x="335" y="268" width="1" height="1" fill="#00FF00"/>
<rect x="336" y="268" width="1" height="1" fill="#00FF00"/>
<rect x="337" y="269" width="1" height="1" fill="#00FF00"/>
<rect x="338" y="270" width="1" height="1" fill="#00FF00"/>
<rect x="339" y="270" width="1" height="1" fill="#00FF00"/>
<rect x="340" y="271" width="1" height="1" fill="#00FF00"/>
<rect x="341" y="271" width="1" height="1" fill="#00FF00"/>
<rect x="342" y="272" width="1" height="1" fill="#00FF00"/>
<rect x="343" y="272" width="1" height="1" fill="#00FF00"/>
<rect x="344" y="273" width="1" height="1" fill="#00FF00"/>
<rect x="345" y="273" width="1" height="1" fill="#00FF00"/>
<rect x="346" y="274" width="1" height="1" fill="#00FF00"/>
<rect x="347" y="275" width="1" height="1" fill="#00FF00"/>
<rect x="348" y="275" width="1" height="1" fill="#00FF00"/>
<rect x="349" y="276" width="1" height="1" fill="#00FF00"/>
<rect x="350" y="276" width="1" height="1" fill="#00FF00"/>
<rect x="351" y="277" width="1" height="1" fill="#00FF00"/>
<rect x="352" y="277" width="1" height="1" fill="#00FF00"/>
<rect x="353" y="278" width="1" height="1" fill="#00FF00"/>
<rect x="354" y="279" width="1" height="1" fill="#00FF00"/>
<rect x="355" y="279" width="1" height="1" fill="#00FF00"/>
<rect x="356" y="280" width="1" height="1" fill="#00FF00"/>
<rect x="357" y="280" width="1" height="1" fill="#00FF00"/>
<rect x="358" y="281" width="1" height="1" fill="#00FF00"/>
<rect x="359" y="281" width="1" height="1" fill="#00FF00"/>
<rect x="360" y="282" width="1" height="1" fill="#00FF00"/>
<rect x="361" y="283" width="1" height="1" fill="#00FF00"/>
<rect x="362" y="283" width="1" height="1" fill="#00FF00"/>
<rect x="363" y="284" width="1" height="1" fill="#00FF00"/>
<rect x="364" y="284" width="1" height="1" fill="#00FF00"/>
<rect x="365" y="285" width="1" height="1" fill="#00FF00"/>
<rect x="366" y="286" width="1" height="1" fill="#00FF00"/>
<rect x="367" y="286" width="1" height="1" fill="#00FF00"/>
<rect x="368" y="287" width="1" height="1" fill="#00FF00"/>
<rect x="369" y="287" width="1" height="1" fill="#00FF00"/>
<rect x="370" y="288" width="1" height="1" fill="#00FF00"/>
<rect x="371" y="289" width="1" height="1" fill="#00FF00"/>
<rect x="372" y="289" width="1" height="1" fill="#00FF00"/>
<rect x="373" y="290" width="1" height="1" fill="#00FF00"/>
<rect x="374" y="291" width="1" height="1" fill="#00FF00"/>
<rect x="375" y="291" width="1" height="1" fill="#00FF00"/>
<rect x="376" y="292" width="1" height="1" fill="#00FF00"/>
<rect x="377" y="292" width="1" height="1" fill="#00FF00"/>
<rect x="378" y="293" width="1" height="1" fill="#00FF00"/>
<rect x="379" y="294" width="1" height="1" fill="#00FF00"/>
<rect x="380" y="294" width="1" height="1" fill="#00FF00"/>
<rect x="381" y="295" width="1" height="1" fill="#00FF00"/>
<rect x="382" y="296" width="1" height="1" fill="#00FF00"/>
<rect x="383" y="296" width="1" height="1" fill="#00FF00"/>
<rect x="384" y="297" width="1" height="1" fill="#00FF00"/>
<rect x="385" y="298" width="1" height="1" fill="#00FF00"/>
<rect x="386" y="298" width="1" height="1" fill="#00FF00"/>
<rect x="387" y="299" width="1" height="1" fill="#00FF00"/>
<rect x="388" y="300" width="1" height="1" fill="#00FF00"/>
<rect x="389" y="300" width="1" height="1" fill="#00FF00"/>
<rect x="390" y="301" width="1" height="1" fill="#00FF00"/>
<rect x="391" y="302" width="1" height="1" fill="#00FF00"/>
<rect x="392" y="303" width="1" height="1" fill="#00FF00"/>
<rect x="393" y="303" width="1" height="1" fill="#00FF00"/>
<rect x="394" y="304" width="1" height="1" fill="#00FF00"/>
<rect x="395" y="305" width="1" height="1" fill="#00FF00"/>
<rect x="396" y="305" width="1" height="1" fill="#00FF00"/>
<rect x="397" y="306" width="1" height="1" fill="#00FF00"/>
<rect x="398" y="307" width="1" height="1" fill="#00FF00"/>
<rect x="399" y="308" width="1" height="1" fill="#00FF00"/>
<rect x="400" y="308" width="1" height="1" fill="#00FF00"/>
<rect x="401" y="309" width="1" height="1" fill="#00FF00"/>
<rect x="402" y="310" width="1" height="1" fill="#00FF00"/>
<rect x="403" y="310" width="1" height="1" fill="#00FF00"/>
<rect x="404" y="311" width="1" height="1" fill="#00FF00"/>
<rect x="405" y="312" width="1" height="1" fill="#00FF00"/>
<rect x="406" y="313" width="1" height="1" fill="#00FF00"/>
<rect x="407" y="314" width="1" height="1" fill="#00FF00"/>
<rect x="408" y="314" width="1" height="1" fill="#00FF00"/>
<rect x="409" y="315" width="1" height="1" fill="#00FF00"/>
<rect x="410" y="316" width="1" height="1" fill="#00FF00"/>
<rect x="411" y="317" width="1" height="1" fill="#00FF00"/>
<rect x="412" y="317" width="1" height="1" fill="#00FF00"/>
<rect x="413" y="318" width="1" height="1" fill="#00FF00"/>
<rect x="414" y="319" width="1" height="1" fill="#00FF00"/>
<rect x="415" y="320" width="1" height="1" fill="#00FF00"/>
<rect x="416" y="321" width="1" height="1" fill="#00FF00"/>
<rect x="417" y="322" width="1" height="1" fill="#00FF00"/>
<rect x="418" y="322" width="1" height="1" fill="#00FF00"/>
<rect x="419" y="323" width="1" height="1" fill="#00FF00"/>
<rect x="420" y="324" width="1" height="1" fill="#00FF00"/>
<rect x="421" y="325" width="1" height="1" fill="#00FF00"/>
<rect x="422" y="326" width="1" height="1" fill="#00FF00"/>
<rect x="423" y="327" width="1" height="1" fill="#00FF00"/>
<rect x="424" y="328" width="1" height="1" fill="#00FF00"/>
<rect x="425" y="329" width="1" height="1" fill="#00FF00"/>
<rect x="426" y="329" width="1" height="1" fill="#00FF00"/>
<rect x="427" y="330" width="1" height="1" fill="#00FF00"/>
<rect x="428" y="331" width="1" height="1" fill="#00FF00"/>
<rect x="429" y="332" width="1" height="1" fill="#00FF00"/>
<rect x="430" y="333" width="1" height="1" fill="#00FF00"/>
<rect x="431" y="334" width="1" height="1" fill="#00FF00"/>
<rect x="241" y="227" width="1" height="31" fill="#00FF00"/>
<rect x="242" y="258" width="1" height="30" fill="#00FF00"/>
<rect x="243" y="242" width="1" height="30" fill="#00FF00"/>
<rect x="53" y="336" width="46" height="1" fill="#FFFF00"/>
<rect x="99" y="335" width="2" height="1" fill="#FFFF00"/>
<rect x="101" y="336" width="2" height="1" fill="#FFFF00"/>
<rect x="103" y="335" width="2" height="1" fill="#FFFF00"/>
<rect x="105" y="336" width="2" height="1" fill="#FFFF00"/>
<rect x="107" y="335" width="134" height="1" fill="#FFFF00"/>
<rect x="241" y="335" width="1" height="14" fill="#FFFF00"/>
<rect x="243" y="342" width="1" height="20" fill="#FFFF00"/>
<rect x="245" y="335" width="73" height="1" fill="#FFFF00"/>
<rect x="318" y="336" width="1" height="1" fill="#FFFF00"/>
<rect x="319" y="335" width="4" height="1" fill="#FFFF00"/>
<rect x="323" y="336" width="82" height="1" fill="#FFFF00"/>
<rect x="405" y="337" width="27" height="1" fill="#FFFF00"/>
<rect x="431" y="338" width="1" height="1" fill="#FFFF00"/>
<rect x="446" y="406" width="1" height="1" fill="#0000FF"/>
<rect x="446" y="395" width="1" height="1" fill="#0000FF"/>
<rect x="446" y="384" width="1" height="1" fill="#0000FF"/>
<rect x="446" y="373" width="1" height="1" fill="#0000FF"/>
<rect x="446" y="363" width="1" height="1" fill="#0000FF"/>
<rect x="446" y="352" width="1" height="1" fill="#0000FF"/>
<rect x="446" y="341" width="1" height="1" fill="#0000FF"/>
<rect x="446" y="330" width="1" height="1" fill="#0000FF"/>
<rect x="446" y="319" width="1" height="1" fill="#0000FF"/>
<rect x="446" y="309" width="1" height="1" fill="#0000FF"/>
<rect x="446" y="298" width="1" height="1" fill="#0000FF"/>
<rect x="446" y="287" width="1" height="1" fill="#0000FF"/>
<rect x="446" y="276" width="1" height="1" fill="#0000FF"/>
<rect x="446" y="265" width="1" height="1" fill="#0000FF"/>
<rect x="446" y="255" width="1" height="1" fill="#0000FF"/>
<rect x="446" y="244" width="1" height="1" fill="#0000FF"/>
<rect x="446" y="233" width="1" height="1" fill="#0000FF"/>
<rect x="446" y="222" width="1" height="1" fill="#0000FF"/>
<rect x="446" y="211" width="1" height="1" fill="#0000FF"/>
<rect x="446" y="201" width="1" height="1" fill="#0000FF"/>
<rect x="446" y="190" width="1" height="1" fill="#0000FF"/>
<rect x="446" y="179" width="1" height="1" fill="#0000FF"/>
<rect x="446" y="168" width="1" height="1" fill="#0000FF"/>
<rect x="446" y="157" width="1" height="1" fill="#0000FF"/>
<rect x="244" y="131" width="1" height="287" fill="#FF00FF"/>
<rect x="433" y="131" width="1" height="287" fill="#FF0000"/>
</svg>
<span style="left:23.74px;top:124px;font-size:12px;color:#000;letter-spacing:0px;white-space:pre;transform:scaleX(0.9583);transform-origin:0 0;">18</span>
<svg style="left:39px;top:125px" width="7" height="9" shape-rendering="crispEdges" fill="#000"><rect x="0" y="0" width="1" height="1"/><rect x="6" y="0" width="1" height="1"/><rect x="0" y="1" width="1" height="1"/><rect x="6" y="1" width="1" height="1"/><rect x="1" y="2" width="1" height="1"/><rect x="5" y="2" width="1" height="1"/><rect x="2" y="3" width="1" height="1"/><rect x="4" y="3" width="1" height="1"/><rect x="3" y="4" width="1" height="1"/><rect x="2" y="5" width="1" height="1"/><rect x="4" y="5" width="1" height="1"/><rect x="1" y="6" width="1" height="1"/><rect x="5" y="6" width="1" height="1"/><rect x="0" y="7" width="1" height="1"/><rect x="6" y="7" width="1" height="1"/><rect x="0" y="8" width="1" height="1"/><rect x="6" y="8" width="1" height="1"/></svg>
<span style="left:23.74px;top:156px;font-size:12px;color:#000;letter-spacing:0px;white-space:pre;transform:scaleX(0.9583);transform-origin:0 0;">16</span>
<svg style="left:39px;top:157px" width="7" height="9" shape-rendering="crispEdges" fill="#000"><rect x="0" y="0" width="1" height="1"/><rect x="6" y="0" width="1" height="1"/><rect x="0" y="1" width="1" height="1"/><rect x="6" y="1" width="1" height="1"/><rect x="1" y="2" width="1" height="1"/><rect x="5" y="2" width="1" height="1"/><rect x="2" y="3" width="1" height="1"/><rect x="4" y="3" width="1" height="1"/><rect x="3" y="4" width="1" height="1"/><rect x="2" y="5" width="1" height="1"/><rect x="4" y="5" width="1" height="1"/><rect x="1" y="6" width="1" height="1"/><rect x="5" y="6" width="1" height="1"/><rect x="0" y="7" width="1" height="1"/><rect x="6" y="7" width="1" height="1"/><rect x="0" y="8" width="1" height="1"/><rect x="6" y="8" width="1" height="1"/></svg>
<span style="left:23.74px;top:188px;font-size:12px;color:#000;letter-spacing:0px;white-space:pre;transform:scaleX(0.9583);transform-origin:0 0;">14</span>
<svg style="left:39px;top:189px" width="7" height="9" shape-rendering="crispEdges" fill="#000"><rect x="0" y="0" width="1" height="1"/><rect x="6" y="0" width="1" height="1"/><rect x="0" y="1" width="1" height="1"/><rect x="6" y="1" width="1" height="1"/><rect x="1" y="2" width="1" height="1"/><rect x="5" y="2" width="1" height="1"/><rect x="2" y="3" width="1" height="1"/><rect x="4" y="3" width="1" height="1"/><rect x="3" y="4" width="1" height="1"/><rect x="2" y="5" width="1" height="1"/><rect x="4" y="5" width="1" height="1"/><rect x="1" y="6" width="1" height="1"/><rect x="5" y="6" width="1" height="1"/><rect x="0" y="7" width="1" height="1"/><rect x="6" y="7" width="1" height="1"/><rect x="0" y="8" width="1" height="1"/><rect x="6" y="8" width="1" height="1"/></svg>
<span style="left:23.74px;top:220px;font-size:12px;color:#000;letter-spacing:0px;white-space:pre;transform:scaleX(0.9583);transform-origin:0 0;">12</span>
<svg style="left:39px;top:221px" width="7" height="9" shape-rendering="crispEdges" fill="#000"><rect x="0" y="0" width="1" height="1"/><rect x="6" y="0" width="1" height="1"/><rect x="0" y="1" width="1" height="1"/><rect x="6" y="1" width="1" height="1"/><rect x="1" y="2" width="1" height="1"/><rect x="5" y="2" width="1" height="1"/><rect x="2" y="3" width="1" height="1"/><rect x="4" y="3" width="1" height="1"/><rect x="3" y="4" width="1" height="1"/><rect x="2" y="5" width="1" height="1"/><rect x="4" y="5" width="1" height="1"/><rect x="1" y="6" width="1" height="1"/><rect x="5" y="6" width="1" height="1"/><rect x="0" y="7" width="1" height="1"/><rect x="6" y="7" width="1" height="1"/><rect x="0" y="8" width="1" height="1"/><rect x="6" y="8" width="1" height="1"/></svg>
<span style="left:23.74px;top:252px;font-size:12px;color:#000;letter-spacing:0px;white-space:pre;transform:scaleX(0.9583);transform-origin:0 0;">10</span>
<svg style="left:39px;top:253px" width="7" height="9" shape-rendering="crispEdges" fill="#000"><rect x="0" y="0" width="1" height="1"/><rect x="6" y="0" width="1" height="1"/><rect x="0" y="1" width="1" height="1"/><rect x="6" y="1" width="1" height="1"/><rect x="1" y="2" width="1" height="1"/><rect x="5" y="2" width="1" height="1"/><rect x="2" y="3" width="1" height="1"/><rect x="4" y="3" width="1" height="1"/><rect x="3" y="4" width="1" height="1"/><rect x="2" y="5" width="1" height="1"/><rect x="4" y="5" width="1" height="1"/><rect x="1" y="6" width="1" height="1"/><rect x="5" y="6" width="1" height="1"/><rect x="0" y="7" width="1" height="1"/><rect x="6" y="7" width="1" height="1"/><rect x="0" y="8" width="1" height="1"/><rect x="6" y="8" width="1" height="1"/></svg>
<span style="left:30.80px;top:283px;font-size:12px;color:#000;letter-spacing:0px;white-space:pre;transform:scaleX(0.9000);transform-origin:0 0;">8</span>
<svg style="left:39px;top:284px" width="7" height="9" shape-rendering="crispEdges" fill="#000"><rect x="0" y="0" width="1" height="1"/><rect x="6" y="0" width="1" height="1"/><rect x="0" y="1" width="1" height="1"/><rect x="6" y="1" width="1" height="1"/><rect x="1" y="2" width="1" height="1"/><rect x="5" y="2" width="1" height="1"/><rect x="2" y="3" width="1" height="1"/><rect x="4" y="3" width="1" height="1"/><rect x="3" y="4" width="1" height="1"/><rect x="2" y="5" width="1" height="1"/><rect x="4" y="5" width="1" height="1"/><rect x="1" y="6" width="1" height="1"/><rect x="5" y="6" width="1" height="1"/><rect x="0" y="7" width="1" height="1"/><rect x="6" y="7" width="1" height="1"/><rect x="0" y="8" width="1" height="1"/><rect x="6" y="8" width="1" height="1"/></svg>
<span style="left:30.80px;top:315px;font-size:12px;color:#000;letter-spacing:0px;white-space:pre;transform:scaleX(0.9000);transform-origin:0 0;">6</span>
<svg style="left:39px;top:316px" width="7" height="9" shape-rendering="crispEdges" fill="#000"><rect x="0" y="0" width="1" height="1"/><rect x="6" y="0" width="1" height="1"/><rect x="0" y="1" width="1" height="1"/><rect x="6" y="1" width="1" height="1"/><rect x="1" y="2" width="1" height="1"/><rect x="5" y="2" width="1" height="1"/><rect x="2" y="3" width="1" height="1"/><rect x="4" y="3" width="1" height="1"/><rect x="3" y="4" width="1" height="1"/><rect x="2" y="5" width="1" height="1"/><rect x="4" y="5" width="1" height="1"/><rect x="1" y="6" width="1" height="1"/><rect x="5" y="6" width="1" height="1"/><rect x="0" y="7" width="1" height="1"/><rect x="6" y="7" width="1" height="1"/><rect x="0" y="8" width="1" height="1"/><rect x="6" y="8" width="1" height="1"/></svg>
<span style="left:30.80px;top:347px;font-size:12px;color:#000;letter-spacing:0px;white-space:pre;transform:scaleX(0.7714);transform-origin:0 0;">4</span>
<svg style="left:39px;top:348px" width="7" height="9" shape-rendering="crispEdges" fill="#000"><rect x="0" y="0" width="1" height="1"/><rect x="6" y="0" width="1" height="1"/><rect x="0" y="1" width="1" height="1"/><rect x="6" y="1" width="1" height="1"/><rect x="1" y="2" width="1" height="1"/><rect x="5" y="2" width="1" height="1"/><rect x="2" y="3" width="1" height="1"/><rect x="4" y="3" width="1" height="1"/><rect x="3" y="4" width="1" height="1"/><rect x="2" y="5" width="1" height="1"/><rect x="4" y="5" width="1" height="1"/><rect x="1" y="6" width="1" height="1"/><rect x="5" y="6" width="1" height="1"/><rect x="0" y="7" width="1" height="1"/><rect x="6" y="7" width="1" height="1"/><rect x="0" y="8" width="1" height="1"/><rect x="6" y="8" width="1" height="1"/></svg>
<span style="left:30.80px;top:379px;font-size:12px;color:#000;letter-spacing:0px;white-space:pre;transform:scaleX(0.9000);transform-origin:0 0;">2</span>
<svg style="left:39px;top:380px" width="7" height="9" shape-rendering="crispEdges" fill="#000"><rect x="0" y="0" width="1" height="1"/><rect x="6" y="0" width="1" height="1"/><rect x="0" y="1" width="1" height="1"/><rect x="6" y="1" width="1" height="1"/><rect x="1" y="2" width="1" height="1"/><rect x="5" y="2" width="1" height="1"/><rect x="2" y="3" width="1" height="1"/><rect x="4" y="3" width="1" height="1"/><rect x="3" y="4" width="1" height="1"/><rect x="2" y="5" width="1" height="1"/><rect x="4" y="5" width="1" height="1"/><rect x="1" y="6" width="1" height="1"/><rect x="5" y="6" width="1" height="1"/><rect x="0" y="7" width="1" height="1"/><rect x="6" y="7" width="1" height="1"/><rect x="0" y="8" width="1" height="1"/><rect x="6" y="8" width="1" height="1"/></svg>
<span style="left:449.70px;top:366px;font-size:12px;color:#000;letter-spacing:0px;white-space:pre;transform:scaleX(0.8286);transform-origin:0 0;">4</span>
<span style="left:449.70px;top:323px;font-size:12px;color:#000;letter-spacing:0px;white-space:pre;transform:scaleX(0.9667);transform-origin:0 0;">8</span>
<span style="left:448.77px;top:280px;font-size:12px;color:#000;letter-spacing:0px;white-space:pre;transform:scaleX(0.9333);transform-origin:0 0;">12</span>
<span style="left:448.77px;top:237px;font-size:12px;color:#000;letter-spacing:0px;white-space:pre;transform:scaleX(0.9333);transform-origin:0 0;">16</span>
<span style="left:449.70px;top:194px;font-size:12px;color:#000;letter-spacing:0px;white-space:pre;transform:scaleX(0.8615);transform-origin:0 0;">20</span>
<span style="left:449.70px;top:150px;font-size:12px;color:#000;letter-spacing:0px;white-space:pre;transform:scaleX(0.8615);transform-origin:0 0;">24</span>
<span style="left:47.70px;top:423px;font-size:12px;color:#000;letter-spacing:0px;white-space:pre;transform:scaleX(0.9187);transform-origin:0 0;">0.0</span>
<span style="left:95.72px;top:423px;font-size:12px;color:#000;letter-spacing:0px;white-space:pre;transform:scaleX(0.9800);transform-origin:0 0;">1.0</span>
<span style="left:145.70px;top:423px;font-size:12px;color:#000;letter-spacing:0px;white-space:pre;transform:scaleX(0.9188);transform-origin:0 0;">2.0</span>
<span style="left:193.72px;top:423px;font-size:12px;color:#000;letter-spacing:0px;white-space:pre;transform:scaleX(0.9800);transform-origin:0 0;">3.0</span>
<span style="left:243.70px;top:423px;font-size:12px;color:#000;letter-spacing:0px;white-space:pre;transform:scaleX(0.9187);transform-origin:0 0;">4.0</span>
<span style="left:291.72px;top:423px;font-size:12px;color:#000;letter-spacing:0px;white-space:pre;transform:scaleX(0.9800);transform-origin:0 0;">5.0</span>
<span style="left:341.70px;top:423px;font-size:12px;color:#000;letter-spacing:0px;white-space:pre;transform:scaleX(0.9187);transform-origin:0 0;">6.0</span>
<span style="left:390.70px;top:423px;font-size:12px;color:#000;letter-spacing:0px;white-space:pre;transform:scaleX(0.9187);transform-origin:0 0;">7.0</span>
<span style="left:439.70px;top:423px;font-size:12px;color:#000;letter-spacing:0px;white-space:pre;transform:scaleX(0.9187);transform-origin:0 0;">8.0</span>
<div style="left:14px;top:440px;width:448px;height:1px;background:#808080;"></div>
<div style="left:14px;top:440px;width:1px;height:11px;background:#808080;"></div>
<div style="left:14px;top:450px;width:449px;height:1px;background:#FFFFFF;"></div>
<div style="left:462px;top:440px;width:1px;height:11px;background:#FFFFFF;"></div>
<div style="left:15px;top:441px;width:447px;height:9px;background:#EAE4D2;"></div>
<div style="left:16px;top:442px;width:4px;height:7px;background:#0A246A;"></div>
<div style="left:22px;top:442px;width:4px;height:7px;background:#0A246A;"></div>
<div style="left:28px;top:442px;width:4px;height:7px;background:#0A246A;"></div>
<div style="left:34px;top:442px;width:4px;height:7px;background:#0A246A;"></div>
<div style="left:40px;top:442px;width:4px;height:7px;background:#0A246A;"></div>
<div style="left:46px;top:442px;width:4px;height:7px;background:#0A246A;"></div>
<div style="left:52px;top:442px;width:4px;height:7px;background:#0A246A;"></div>
<div style="left:58px;top:442px;width:4px;height:7px;background:#0A246A;"></div>
<div style="left:64px;top:442px;width:4px;height:7px;background:#0A246A;"></div>
<div style="left:70px;top:442px;width:4px;height:7px;background:#0A246A;"></div>
<div style="left:76px;top:442px;width:4px;height:7px;background:#0A246A;"></div>
<div style="left:82px;top:442px;width:4px;height:7px;background:#0A246A;"></div>
<div style="left:88px;top:442px;width:4px;height:7px;background:#0A246A;"></div>
<div style="left:94px;top:442px;width:4px;height:7px;background:#0A246A;"></div>
<div style="left:100px;top:442px;width:4px;height:7px;background:#0A246A;"></div>
<div style="left:106px;top:442px;width:4px;height:7px;background:#0A246A;"></div>
<div style="left:112px;top:442px;width:4px;height:7px;background:#0A246A;"></div>
<div style="left:118px;top:442px;width:4px;height:7px;background:#0A246A;"></div>
<div style="left:124px;top:442px;width:4px;height:7px;background:#0A246A;"></div>
<div style="left:130px;top:442px;width:4px;height:7px;background:#0A246A;"></div>
<div style="left:136px;top:442px;width:4px;height:7px;background:#0A246A;"></div>
<div style="left:142px;top:442px;width:4px;height:7px;background:#0A246A;"></div>
<div style="left:148px;top:442px;width:4px;height:7px;background:#0A246A;"></div>
<div style="left:154px;top:442px;width:4px;height:7px;background:#0A246A;"></div>
<div style="left:160px;top:442px;width:4px;height:7px;background:#0A246A;"></div>
<div style="left:166px;top:442px;width:4px;height:7px;background:#0A246A;"></div>
<div style="left:172px;top:442px;width:4px;height:7px;background:#0A246A;"></div>
<div style="left:178px;top:442px;width:4px;height:7px;background:#0A246A;"></div>
<div style="left:184px;top:442px;width:4px;height:7px;background:#0A246A;"></div>
<div style="left:190px;top:442px;width:4px;height:7px;background:#0A246A;"></div>
<div style="left:196px;top:442px;width:4px;height:7px;background:#0A246A;"></div>
<div style="left:202px;top:442px;width:4px;height:7px;background:#0A246A;"></div>
<div style="left:208px;top:442px;width:4px;height:7px;background:#0A246A;"></div>
<div style="left:214px;top:442px;width:4px;height:7px;background:#0A246A;"></div>
<div style="left:220px;top:442px;width:4px;height:7px;background:#0A246A;"></div>
<div style="left:226px;top:442px;width:4px;height:7px;background:#0A246A;"></div>
<div style="left:232px;top:442px;width:4px;height:7px;background:#0A246A;"></div>
<div style="left:238px;top:442px;width:4px;height:7px;background:#0A246A;"></div>
<div style="left:244px;top:442px;width:4px;height:7px;background:#0A246A;"></div>
<div style="left:250px;top:442px;width:4px;height:7px;background:#0A246A;"></div>
<div style="left:256px;top:442px;width:4px;height:7px;background:#0A246A;"></div>
<div style="left:262px;top:442px;width:4px;height:7px;background:#0A246A;"></div>
<div style="left:268px;top:442px;width:4px;height:7px;background:#0A246A;"></div>
<div style="left:274px;top:442px;width:4px;height:7px;background:#0A246A;"></div>
<div style="left:280px;top:442px;width:4px;height:7px;background:#0A246A;"></div>
<div style="left:286px;top:442px;width:4px;height:7px;background:#0A246A;"></div>
<div style="left:292px;top:442px;width:4px;height:7px;background:#0A246A;"></div>
<div style="left:298px;top:442px;width:4px;height:7px;background:#0A246A;"></div>
<div style="left:304px;top:442px;width:4px;height:7px;background:#0A246A;"></div>
<div style="left:310px;top:442px;width:4px;height:7px;background:#0A246A;"></div>
<div style="left:316px;top:442px;width:4px;height:7px;background:#0A246A;"></div>
<div style="left:322px;top:442px;width:4px;height:7px;background:#0A246A;"></div>
<div style="left:328px;top:442px;width:4px;height:7px;background:#0A246A;"></div>
<div style="left:334px;top:442px;width:4px;height:7px;background:#0A246A;"></div>
<div style="left:340px;top:442px;width:4px;height:7px;background:#0A246A;"></div>
<div style="left:346px;top:442px;width:4px;height:7px;background:#0A246A;"></div>
<div style="left:352px;top:442px;width:4px;height:7px;background:#0A246A;"></div>
<div style="left:358px;top:442px;width:4px;height:7px;background:#0A246A;"></div>
<div style="left:364px;top:442px;width:4px;height:7px;background:#0A246A;"></div>
<div style="left:370px;top:442px;width:4px;height:7px;background:#0A246A;"></div>
<div style="left:376px;top:442px;width:4px;height:7px;background:#0A246A;"></div>
<div style="left:382px;top:442px;width:4px;height:7px;background:#0A246A;"></div>
<div style="left:388px;top:442px;width:4px;height:7px;background:#0A246A;"></div>
<div style="left:394px;top:442px;width:4px;height:7px;background:#0A246A;"></div>
<div style="left:400px;top:442px;width:4px;height:7px;background:#0A246A;"></div>
<div style="left:406px;top:442px;width:4px;height:7px;background:#0A246A;"></div>
<div style="left:412px;top:442px;width:4px;height:7px;background:#0A246A;"></div>
<div style="left:418px;top:442px;width:4px;height:7px;background:#0A246A;"></div>
<div style="left:424px;top:442px;width:4px;height:7px;background:#0A246A;"></div>
<div style="left:430px;top:442px;width:4px;height:7px;background:#0A246A;"></div>
<div style="left:436px;top:442px;width:4px;height:7px;background:#0A246A;"></div>
<div style="left:442px;top:442px;width:4px;height:7px;background:#0A246A;"></div>
<div style="left:448px;top:442px;width:4px;height:7px;background:#0A246A;"></div>
<div style="left:454px;top:442px;width:4px;height:7px;background:#0A246A;"></div>
<div style="left:460px;top:442px;width:2px;height:7px;background:#0A246A;"></div>
<div style="left:14px;top:454px;width:449px;height:60px;background:#FFFFFF;"></div>
<div style="left:14px;top:454px;width:448px;height:1px;background:#808080;"></div>
<div style="left:14px;top:454px;width:1px;height:59px;background:#808080;"></div>
<div style="left:14px;top:513px;width:449px;height:1px;background:#FFFFFF;"></div>
<div style="left:462px;top:454px;width:1px;height:60px;background:#FFFFFF;"></div>
<div style="left:15px;top:455px;width:446px;height:1px;background:#404040;"></div>
<div style="left:15px;top:455px;width:1px;height:57px;background:#404040;"></div>
<div style="left:15px;top:512px;width:447px;height:1px;background:#D4D0C8;"></div>
<div style="left:461px;top:455px;width:1px;height:58px;background:#D4D0C8;"></div>
<span style="left:34.00px;top:457px;font-size:11px;color:#000;letter-spacing:0px;white-space:pre;">[22:12:36]</span>
<span style="left:91.82px;top:457px;font-size:11px;color:#000;letter-spacing:0px;white-space:pre;transform:scaleX(0.9845);transform-origin:0 0;">Disc: DVD+R DL, 7.81 GB, MKM 003</span>
<svg style="left:0;top:0" width="40" height="520" shape-rendering="crispEdges"><rect x="28" y="456" width="1" height="1" fill="#000"/><rect x="29" y="457" width="1" height="1" fill="#000"/><rect x="30" y="458" width="1" height="1" fill="#000"/><rect x="31" y="460" width="1" height="1" fill="#808080"/><rect x="31" y="461" width="1" height="1" fill="#808080"/><rect x="30" y="462" width="1" height="1" fill="#000"/><rect x="31" y="463" width="1" height="1" fill="#000"/><rect x="29" y="463" width="1" height="1" fill="#000"/><rect x="28" y="464" width="1" height="1" fill="#000"/><rect x="30" y="464" width="1" height="1" fill="#000"/><rect x="29" y="465" width="1" height="1" fill="#000"/><rect x="28" y="465" width="1" height="1" fill="#000"/><rect x="21" y="463" width="1" height="1" fill="#000"/><rect x="22" y="464" width="1" height="1" fill="#000"/><rect x="23" y="465" width="1" height="1" fill="#000"/><rect x="25" y="465" width="1" height="1" fill="#000"/><rect x="25" y="466" width="1" height="1" fill="#000"/><rect x="26" y="467" width="1" height="1" fill="#000"/><rect x="27" y="466" width="1" height="1" fill="#808080"/><rect x="21" y="457" width="1" height="1" fill="#808080"/><rect x="20" y="459" width="1" height="1" fill="#A0A0A0"/><rect x="20" y="462" width="1" height="1" fill="#808080"/><rect x="23" y="456" width="1" height="1" fill="#A0A0A0"/><rect x="25" y="457" width="1" height="1" fill="#0000FF"/><rect x="24" y="458" width="1" height="1" fill="#0000FF"/><rect x="25" y="458" width="1" height="1" fill="#0000FF"/><rect x="26" y="458" width="1" height="1" fill="#0000FF"/><rect x="25" y="460" width="1" height="1" fill="#0000FF"/><rect x="26" y="460" width="1" height="1" fill="#0000FF"/><rect x="25" y="461" width="1" height="1" fill="#0000FF"/><rect x="26" y="461" width="1" height="1" fill="#0000FF"/><rect x="25" y="462" width="1" height="1" fill="#0000FF"/><rect x="26" y="462" width="1" height="1" fill="#0000FF"/></svg>
<span style="left:34.00px;top:471px;font-size:11px;color:#000;letter-spacing:0px;white-space:pre;">[22:12:55]</span>
<span style="left:91.86px;top:471px;font-size:11px;color:#000;letter-spacing:0px;white-space:pre;transform:scaleX(0.9433);transform-origin:0 0;">Starting transfer rate test</span>
<svg style="left:0;top:0" width="40" height="520" shape-rendering="crispEdges"><rect x="28" y="470" width="1" height="1" fill="#000"/><rect x="29" y="471" width="1" height="1" fill="#000"/><rect x="30" y="472" width="1" height="1" fill="#000"/><rect x="31" y="474" width="1" height="1" fill="#808080"/><rect x="31" y="475" width="1" height="1" fill="#808080"/><rect x="30" y="476" width="1" height="1" fill="#000"/><rect x="31" y="477" width="1" height="1" fill="#000"/><rect x="29" y="477" width="1" height="1" fill="#000"/><rect x="28" y="478" width="1" height="1" fill="#000"/><rect x="30" y="478" width="1" height="1" fill="#000"/><rect x="29" y="479" width="1" height="1" fill="#000"/><rect x="28" y="479" width="1" height="1" fill="#000"/><rect x="21" y="477" width="1" height="1" fill="#000"/><rect x="22" y="478" width="1" height="1" fill="#000"/><rect x="23" y="479" width="1" height="1" fill="#000"/><rect x="25" y="479" width="1" height="1" fill="#000"/><rect x="25" y="480" width="1" height="1" fill="#000"/><rect x="26" y="481" width="1" height="1" fill="#000"/><rect x="27" y="480" width="1" height="1" fill="#808080"/><rect x="21" y="471" width="1" height="1" fill="#808080"/><rect x="20" y="473" width="1" height="1" fill="#A0A0A0"/><rect x="20" y="476" width="1" height="1" fill="#808080"/><rect x="23" y="470" width="1" height="1" fill="#A0A0A0"/><rect x="25" y="471" width="1" height="1" fill="#0000FF"/><rect x="24" y="472" width="1" height="1" fill="#0000FF"/><rect x="25" y="472" width="1" height="1" fill="#0000FF"/><rect x="26" y="472" width="1" height="1" fill="#0000FF"/><rect x="25" y="474" width="1" height="1" fill="#0000FF"/><rect x="26" y="474" width="1" height="1" fill="#0000FF"/><rect x="25" y="475" width="1" height="1" fill="#0000FF"/><rect x="26" y="475" width="1" height="1" fill="#0000FF"/><rect x="25" y="476" width="1" height="1" fill="#0000FF"/><rect x="26" y="476" width="1" height="1" fill="#0000FF"/></svg>
<span style="left:34.00px;top:485px;font-size:11px;color:#000;letter-spacing:0px;white-space:pre;">[22:24:44]</span>
<span style="left:91.80px;top:485px;font-size:11px;color:#000;letter-spacing:0px;white-space:pre;">Speed:5-12</span>
<svg style="left:150px;top:486px" width="7" height="9" shape-rendering="crispEdges" fill="#000"><rect x="0" y="0" width="1" height="1"/><rect x="6" y="0" width="1" height="1"/><rect x="0" y="1" width="1" height="1"/><rect x="6" y="1" width="1" height="1"/><rect x="1" y="2" width="1" height="1"/><rect x="5" y="2" width="1" height="1"/><rect x="2" y="3" width="1" height="1"/><rect x="4" y="3" width="1" height="1"/><rect x="3" y="4" width="1" height="1"/><rect x="2" y="5" width="1" height="1"/><rect x="4" y="5" width="1" height="1"/><rect x="1" y="6" width="1" height="1"/><rect x="5" y="6" width="1" height="1"/><rect x="0" y="7" width="1" height="1"/><rect x="6" y="7" width="1" height="1"/><rect x="0" y="8" width="1" height="1"/><rect x="6" y="8" width="1" height="1"/></svg>
<span style="left:160.50px;top:485px;font-size:11px;color:#000;letter-spacing:0px;white-space:pre;transform:scaleX(0.9700);transform-origin:0 0;">CAV (8.98</span>
<svg style="left:211px;top:486px" width="7" height="9" shape-rendering="crispEdges" fill="#000"><rect x="0" y="0" width="1" height="1"/><rect x="6" y="0" width="1" height="1"/><rect x="0" y="1" width="1" height="1"/><rect x="6" y="1" width="1" height="1"/><rect x="1" y="2" width="1" height="1"/><rect x="5" y="2" width="1" height="1"/><rect x="2" y="3" width="1" height="1"/><rect x="4" y="3" width="1" height="1"/><rect x="3" y="4" width="1" height="1"/><rect x="2" y="5" width="1" height="1"/><rect x="4" y="5" width="1" height="1"/><rect x="1" y="6" width="1" height="1"/><rect x="5" y="6" width="1" height="1"/><rect x="0" y="7" width="1" height="1"/><rect x="6" y="7" width="1" height="1"/><rect x="0" y="8" width="1" height="1"/><rect x="6" y="8" width="1" height="1"/></svg>
<span style="left:222.50px;top:485px;font-size:11px;color:#000;letter-spacing:0px;white-space:pre;transform:scaleX(0.9465);transform-origin:0 0;">average)</span>
<span style="left:34.00px;top:499px;font-size:11px;color:#000;letter-spacing:0px;white-space:pre;">[22:24:44]</span>
<span style="left:91.82px;top:499px;font-size:11px;color:#000;letter-spacing:0px;white-space:pre;transform:scaleX(0.9816);transform-origin:0 0;">Elapsed Time: 11:49</span>
<div style="left:446px;top:456px;width:16px;height:16px;background:#D4D0C8;"></div>
<div style="left:446px;top:456px;width:15px;height:1px;background:#D4D0C8;"></div>
<div style="left:446px;top:456px;width:1px;height:15px;background:#D4D0C8;"></div>
<div style="left:446px;top:471px;width:16px;height:1px;background:#404040;"></div>
<div style="left:461px;top:456px;width:1px;height:16px;background:#404040;"></div>
<div style="left:447px;top:457px;width:13px;height:1px;background:#FFFFFF;"></div>
<div style="left:447px;top:457px;width:1px;height:13px;background:#FFFFFF;"></div>
<div style="left:447px;top:470px;width:14px;height:1px;background:#808080;"></div>
<div style="left:460px;top:457px;width:1px;height:14px;background:#808080;"></div>
<svg style="left:449px;top:462px" width="7" height="4" shape-rendering="crispEdges" fill="#000"><rect x="3" y="0" width="1" height="1"/><rect x="2" y="1" width="3" height="1"/><rect x="1" y="2" width="5" height="1"/><rect x="0" y="3" width="7" height="1"/></svg>
<div style="left:446px;top:472px;width:16px;height:5px;background:repeating-conic-gradient(#FFFFFF 0 25%, #D4D0C8 0 50%) 0 0/2px 2px;"></div>
<div style="left:446px;top:477px;width:16px;height:19px;background:#D4D0C8;"></div>
<div style="left:446px;top:477px;width:15px;height:1px;background:#D4D0C8;"></div>
<div style="left:446px;top:477px;width:1px;height:18px;background:#D4D0C8;"></div>
<div style="left:446px;top:495px;width:16px;height:1px;background:#404040;"></div>
<div style="left:461px;top:477px;width:1px;height:19px;background:#404040;"></div>
<div style="left:447px;top:478px;width:13px;height:1px;background:#FFFFFF;"></div>
<div style="left:447px;top:478px;width:1px;height:16px;background:#FFFFFF;"></div>
<div style="left:447px;top:494px;width:14px;height:1px;background:#808080;"></div>
<div style="left:460px;top:478px;width:1px;height:17px;background:#808080;"></div>
<div style="left:446px;top:496px;width:16px;height:16px;background:#D4D0C8;"></div>
<div style="left:446px;top:496px;width:15px;height:1px;background:#D4D0C8;"></div>
<div style="left:446px;top:496px;width:1px;height:15px;background:#D4D0C8;"></div>
<div style="left:446px;top:511px;width:16px;height:1px;background:#404040;"></div>
<div style="left:461px;top:496px;width:1px;height:16px;background:#404040;"></div>
<div style="left:447px;top:497px;width:13px;height:1px;background:#FFFFFF;"></div>
<div style="left:447px;top:497px;width:1px;height:13px;background:#FFFFFF;"></div>
<div style="left:447px;top:510px;width:14px;height:1px;background:#808080;"></div>
<div style="left:460px;top:497px;width:1px;height:14px;background:#808080;"></div>
<svg style="left:449px;top:502px" width="7" height="4" shape-rendering="crispEdges" fill="#000"><rect x="0" y="0" width="7" height="1"/><rect x="1" y="1" width="5" height="1"/><rect x="2" y="2" width="3" height="1"/><rect x="3" y="3" width="1" height="1"/></svg>
<div style="left:471px;top:124px;width:76px;height:1px;background:#808080;"></div>
<div style="left:471px;top:124px;width:1px;height:169px;background:#808080;"></div>
<div style="left:471px;top:292px;width:76px;height:1px;background:#808080;"></div>
<div style="left:546px;top:124px;width:1px;height:169px;background:#808080;"></div>
<div style="left:472px;top:125px;width:76px;height:1px;background:#FFFFFF;"></div>
<div style="left:472px;top:125px;width:1px;height:169px;background:#FFFFFF;"></div>
<div style="left:472px;top:293px;width:76px;height:1px;background:#FFFFFF;"></div>
<div style="left:547px;top:125px;width:1px;height:169px;background:#FFFFFF;"></div>
<div style="left:478px;top:124px;width:35px;height:2px;background:#D4D0C8;"></div>
<span style="left:479.49px;top:119px;font-size:11px;color:#000;letter-spacing:0px;white-space:pre;transform:scaleX(1.0133);transform-origin:0 0;">Speed</span>
<div style="left:552px;top:124px;width:77px;height:1px;background:#808080;"></div>
<div style="left:552px;top:124px;width:1px;height:124px;background:#808080;"></div>
<div style="left:552px;top:247px;width:77px;height:1px;background:#808080;"></div>
<div style="left:628px;top:124px;width:1px;height:124px;background:#808080;"></div>
<div style="left:553px;top:125px;width:77px;height:1px;background:#FFFFFF;"></div>
<div style="left:553px;top:125px;width:1px;height:124px;background:#FFFFFF;"></div>
<div style="left:553px;top:248px;width:77px;height:1px;background:#FFFFFF;"></div>
<div style="left:629px;top:125px;width:1px;height:124px;background:#FFFFFF;"></div>
<div style="left:559px;top:124px;width:67px;height:2px;background:#D4D0C8;"></div>
<span style="left:561.00px;top:120px;font-size:11px;color:#000;letter-spacing:0px;white-space:pre;transform:scaleX(0.9554);transform-origin:0 0;">Access times</span>
<div style="left:552px;top:267px;width:77px;height:1px;background:#808080;"></div>
<div style="left:552px;top:267px;width:1px;height:167px;background:#808080;"></div>
<div style="left:552px;top:433px;width:77px;height:1px;background:#808080;"></div>
<div style="left:628px;top:267px;width:1px;height:167px;background:#808080;"></div>
<div style="left:553px;top:268px;width:77px;height:1px;background:#FFFFFF;"></div>
<div style="left:553px;top:268px;width:1px;height:167px;background:#FFFFFF;"></div>
<div style="left:553px;top:434px;width:77px;height:1px;background:#FFFFFF;"></div>
<div style="left:629px;top:268px;width:1px;height:167px;background:#FFFFFF;"></div>
<div style="left:559px;top:267px;width:59px;height:2px;background:#D4D0C8;"></div>
<span style="left:561.50px;top:262px;font-size:11px;color:#000;letter-spacing:0px;white-space:pre;transform:scaleX(0.9554);transform-origin:0 0;">CPU usage</span>
<div style="left:471px;top:311px;width:76px;height:1px;background:#808080;"></div>
<div style="left:471px;top:311px;width:1px;height:92px;background:#808080;"></div>
<div style="left:471px;top:402px;width:76px;height:1px;background:#808080;"></div>
<div style="left:546px;top:311px;width:1px;height:92px;background:#808080;"></div>
<div style="left:472px;top:312px;width:76px;height:1px;background:#FFFFFF;"></div>
<div style="left:472px;top:312px;width:1px;height:92px;background:#FFFFFF;"></div>
<div style="left:472px;top:403px;width:76px;height:1px;background:#FFFFFF;"></div>
<div style="left:547px;top:312px;width:1px;height:92px;background:#FFFFFF;"></div>
<div style="left:478px;top:311px;width:60px;height:2px;background:#D4D0C8;"></div>
<span style="left:479.85px;top:306px;font-size:11px;color:#000;letter-spacing:0px;white-space:pre;transform:scaleX(0.9544);transform-origin:0 0;">DAE quality</span>
<div style="left:471px;top:421px;width:76px;height:1px;background:#808080;"></div>
<div style="left:471px;top:421px;width:1px;height:91px;background:#808080;"></div>
<div style="left:471px;top:511px;width:76px;height:1px;background:#808080;"></div>
<div style="left:546px;top:421px;width:1px;height:91px;background:#808080;"></div>
<div style="left:472px;top:422px;width:76px;height:1px;background:#FFFFFF;"></div>
<div style="left:472px;top:422px;width:1px;height:91px;background:#FFFFFF;"></div>
<div style="left:472px;top:512px;width:76px;height:1px;background:#FFFFFF;"></div>
<div style="left:547px;top:422px;width:1px;height:91px;background:#FFFFFF;"></div>
<div style="left:478px;top:421px;width:26px;height:2px;background:#D4D0C8;"></div>
<span style="left:479.48px;top:417px;font-size:11px;color:#000;letter-spacing:0px;white-space:pre;transform:scaleX(1.0250);transform-origin:0 0;">Disc</span>
<div style="left:552px;top:452px;width:77px;height:1px;background:#808080;"></div>
<div style="left:552px;top:452px;width:1px;height:60px;background:#808080;"></div>
<div style="left:552px;top:511px;width:77px;height:1px;background:#808080;"></div>
<div style="left:628px;top:452px;width:1px;height:60px;background:#808080;"></div>
<div style="left:553px;top:453px;width:77px;height:1px;background:#FFFFFF;"></div>
<div style="left:553px;top:453px;width:1px;height:60px;background:#FFFFFF;"></div>
<div style="left:553px;top:512px;width:77px;height:1px;background:#FFFFFF;"></div>
<div style="left:629px;top:453px;width:1px;height:60px;background:#FFFFFF;"></div>
<div style="left:559px;top:452px;width:47px;height:2px;background:#D4D0C8;"></div>
<span style="left:560.61px;top:447px;font-size:11px;color:#000;letter-spacing:0px;white-space:pre;transform:scaleX(0.9929);transform-origin:0 0;">Interface</span>
<div style="left:480px;top:147px;width:59px;height:18px;background:#000;"></div>
<div style="left:480px;top:147px;width:58px;height:1px;background:#808080;"></div>
<div style="left:480px;top:147px;width:1px;height:17px;background:#808080;"></div>
<div style="left:480px;top:164px;width:59px;height:1px;background:#FFFFFF;"></div>
<div style="left:538px;top:147px;width:1px;height:18px;background:#FFFFFF;"></div>
<span style="left:489.20px;top:134px;font-size:11px;color:#000;letter-spacing:0px;white-space:pre;transform:scaleX(0.9683);transform-origin:0 0;">Average</span>
<span style="left:494.80px;top:149px;font-size:12px;font-weight:bold;color:#00FFFF;letter-spacing:0.9px;white-space:pre;transform:scaleX(0.8941);transform-origin:0 0;">8.98x</span>
<div style="left:480px;top:186px;width:59px;height:18px;background:#000;"></div>
<div style="left:480px;top:186px;width:58px;height:1px;background:#808080;"></div>
<div style="left:480px;top:186px;width:1px;height:17px;background:#808080;"></div>
<div style="left:480px;top:203px;width:59px;height:1px;background:#FFFFFF;"></div>
<div style="left:538px;top:186px;width:1px;height:18px;background:#FFFFFF;"></div>
<span style="left:496.86px;top:173px;font-size:11px;color:#000;letter-spacing:0px;white-space:pre;transform:scaleX(0.9360);transform-origin:0 0;">Start:</span>
<span style="left:494.40px;top:188px;font-size:12px;font-weight:bold;color:#00FFFF;letter-spacing:0.9px;white-space:pre;transform:scaleX(0.9029);transform-origin:0 0;">5.01x</span>
<div style="left:480px;top:224px;width:59px;height:18px;background:#000;"></div>
<div style="left:480px;top:224px;width:58px;height:1px;background:#808080;"></div>
<div style="left:480px;top:224px;width:1px;height:17px;background:#808080;"></div>
<div style="left:480px;top:241px;width:59px;height:1px;background:#FFFFFF;"></div>
<div style="left:538px;top:224px;width:1px;height:18px;background:#FFFFFF;"></div>
<span style="left:497.72px;top:211px;font-size:11px;color:#000;letter-spacing:0px;white-space:pre;transform:scaleX(0.9810);transform-origin:0 0;">End:</span>
<span style="left:490.04px;top:226px;font-size:12px;font-weight:bold;color:#00FFFF;letter-spacing:0.9px;white-space:pre;transform:scaleX(0.9615);transform-origin:0 0;">11.98x</span>
<div style="left:480px;top:264px;width:59px;height:18px;background:#000;"></div>
<div style="left:480px;top:264px;width:58px;height:1px;background:#808080;"></div>
<div style="left:480px;top:264px;width:1px;height:17px;background:#808080;"></div>
<div style="left:480px;top:281px;width:59px;height:1px;background:#FFFFFF;"></div>
<div style="left:538px;top:264px;width:1px;height:18px;background:#FFFFFF;"></div>
<span style="left:497.60px;top:248px;font-size:11px;color:#000;letter-spacing:0px;white-space:pre;transform:scaleX(0.9231);transform-origin:0 0;">Type:</span>
<span style="left:497.90px;top:266px;font-size:12px;font-weight:bold;color:#00FFFF;letter-spacing:0.9px;white-space:pre;transform:scaleX(0.8846);transform-origin:0 0;">CAV</span>
<div style="left:561px;top:147px;width:59px;height:18px;background:#000;"></div>
<div style="left:561px;top:147px;width:58px;height:1px;background:#808080;"></div>
<div style="left:561px;top:147px;width:1px;height:17px;background:#808080;"></div>
<div style="left:561px;top:164px;width:59px;height:1px;background:#FFFFFF;"></div>
<div style="left:619px;top:147px;width:1px;height:18px;background:#FFFFFF;"></div>
<span style="left:567.74px;top:135px;font-size:11px;color:#000;letter-spacing:0px;white-space:pre;transform:scaleX(0.9581);transform-origin:0 0;">Random:</span>
<div style="left:561px;top:186px;width:59px;height:18px;background:#000;"></div>
<div style="left:561px;top:186px;width:58px;height:1px;background:#808080;"></div>
<div style="left:561px;top:186px;width:1px;height:17px;background:#808080;"></div>
<div style="left:561px;top:203px;width:59px;height:1px;background:#FFFFFF;"></div>
<div style="left:619px;top:186px;width:1px;height:18px;background:#FFFFFF;"></div>
<span style="left:579.90px;top:174px;font-size:11px;color:#000;letter-spacing:0px;white-space:pre;transform:scaleX(1.1000);transform-origin:0 0;">1/3:</span>
<div style="left:561px;top:222px;width:59px;height:18px;background:#000;"></div>
<div style="left:561px;top:222px;width:58px;height:1px;background:#808080;"></div>
<div style="left:561px;top:222px;width:1px;height:17px;background:#808080;"></div>
<div style="left:561px;top:239px;width:59px;height:1px;background:#FFFFFF;"></div>
<div style="left:619px;top:222px;width:1px;height:18px;background:#FFFFFF;"></div>
<span style="left:580.77px;top:209px;font-size:11px;color:#000;letter-spacing:0px;white-space:pre;transform:scaleX(0.9316);transform-origin:0 0;">Full:</span>
<div style="left:561px;top:290px;width:59px;height:18px;background:#000;"></div>
<div style="left:561px;top:290px;width:58px;height:1px;background:#808080;"></div>
<div style="left:561px;top:290px;width:1px;height:17px;background:#808080;"></div>
<div style="left:561px;top:307px;width:59px;height:1px;background:#FFFFFF;"></div>
<div style="left:619px;top:290px;width:1px;height:18px;background:#FFFFFF;"></div>
<span style="left:581.94px;top:277px;font-size:11px;color:#000;letter-spacing:0px;white-space:pre;transform:scaleX(0.9563);transform-origin:0 0;">1 x:</span>
<div style="left:561px;top:329px;width:59px;height:18px;background:#000;"></div>
<div style="left:561px;top:329px;width:58px;height:1px;background:#808080;"></div>
<div style="left:561px;top:329px;width:1px;height:17px;background:#808080;"></div>
<div style="left:561px;top:346px;width:59px;height:1px;background:#FFFFFF;"></div>
<div style="left:619px;top:329px;width:1px;height:18px;background:#FFFFFF;"></div>
<span style="left:582.90px;top:316px;font-size:11px;color:#000;letter-spacing:0px;white-space:pre;transform:scaleX(0.9000);transform-origin:0 0;">2 x:</span>
<div style="left:561px;top:370px;width:59px;height:18px;background:#000;"></div>
<div style="left:561px;top:370px;width:58px;height:1px;background:#808080;"></div>
<div style="left:561px;top:370px;width:1px;height:17px;background:#808080;"></div>
<div style="left:561px;top:387px;width:59px;height:1px;background:#FFFFFF;"></div>
<div style="left:619px;top:370px;width:1px;height:18px;background:#FFFFFF;"></div>
<span style="left:582.90px;top:357px;font-size:11px;color:#000;letter-spacing:0px;white-space:pre;transform:scaleX(0.9000);transform-origin:0 0;">4 x:</span>
<div style="left:561px;top:407px;width:59px;height:18px;background:#000;"></div>
<div style="left:561px;top:407px;width:58px;height:1px;background:#808080;"></div>
<div style="left:561px;top:407px;width:1px;height:17px;background:#808080;"></div>
<div style="left:561px;top:424px;width:59px;height:1px;background:#FFFFFF;"></div>
<div style="left:619px;top:407px;width:1px;height:18px;background:#FFFFFF;"></div>
<span style="left:582.90px;top:394px;font-size:11px;color:#000;letter-spacing:0px;white-space:pre;transform:scaleX(0.9000);transform-origin:0 0;">8 x:</span>
<div style="left:480px;top:328px;width:59px;height:18px;background:#000;"></div>
<div style="left:480px;top:328px;width:58px;height:1px;background:#808080;"></div>
<div style="left:480px;top:328px;width:1px;height:17px;background:#808080;"></div>
<div style="left:480px;top:345px;width:59px;height:1px;background:#FFFFFF;"></div>
<div style="left:538px;top:328px;width:1px;height:18px;background:#FFFFFF;"></div>
<span style="left:489.10px;top:354px;font-size:11px;color:#000;letter-spacing:0px;white-space:pre;">Accurate</span>
<span style="left:495.80px;top:367px;font-size:11px;color:#000;letter-spacing:0px;white-space:pre;transform:scaleX(0.9303);transform-origin:0 0;">stream</span>
<div style="left:504px;top:386px;width:13px;height:13px;background:#fff;box-sizing:border-box;border:2px solid #000;"></div>
<div style="left:477px;top:443px;width:65px;height:18px;background:#000;"></div>
<div style="left:477px;top:443px;width:64px;height:1px;background:#808080;"></div>
<div style="left:477px;top:443px;width:1px;height:17px;background:#808080;"></div>
<div style="left:477px;top:460px;width:65px;height:1px;background:#FFFFFF;"></div>
<div style="left:541px;top:443px;width:1px;height:18px;background:#FFFFFF;"></div>
<span style="left:497.90px;top:428px;font-size:11px;color:#000;letter-spacing:0px;white-space:pre;transform:scaleX(0.9269);transform-origin:0 0;">Type:</span>
<span style="left:477.45px;top:445px;font-size:12px;font-weight:bold;color:#00FFFF;letter-spacing:0.9px;white-space:pre;transform:scaleX(0.9477);transform-origin:0 0;">DVD+R DL</span>
<div style="left:477px;top:484px;width:65px;height:18px;background:#000;"></div>
<div style="left:477px;top:484px;width:64px;height:1px;background:#808080;"></div>
<div style="left:477px;top:484px;width:1px;height:17px;background:#808080;"></div>
<div style="left:477px;top:501px;width:65px;height:1px;background:#FFFFFF;"></div>
<div style="left:541px;top:484px;width:1px;height:18px;background:#FFFFFF;"></div>
<span style="left:490.71px;top:467px;font-size:11px;color:#000;letter-spacing:0px;white-space:pre;transform:scaleX(0.9914);transform-origin:0 0;">Length:</span>
<span style="left:487.10px;top:486px;font-size:12px;font-weight:bold;color:#00FFFF;letter-spacing:0.9px;white-space:pre;transform:scaleX(0.8860);transform-origin:0 0;">7.81 GB</span>
<div style="left:561px;top:484px;width:59px;height:18px;background:#000;"></div>
<div style="left:561px;top:484px;width:58px;height:1px;background:#808080;"></div>
<div style="left:561px;top:484px;width:1px;height:17px;background:#808080;"></div>
<div style="left:561px;top:501px;width:59px;height:1px;background:#FFFFFF;"></div>
<div style="left:619px;top:484px;width:1px;height:18px;background:#FFFFFF;"></div>
<span style="left:565.65px;top:468px;font-size:11px;color:#000;letter-spacing:0px;white-space:pre;transform:scaleX(0.9469);transform-origin:0 0;">Burst rate:</span>
</body></html>
